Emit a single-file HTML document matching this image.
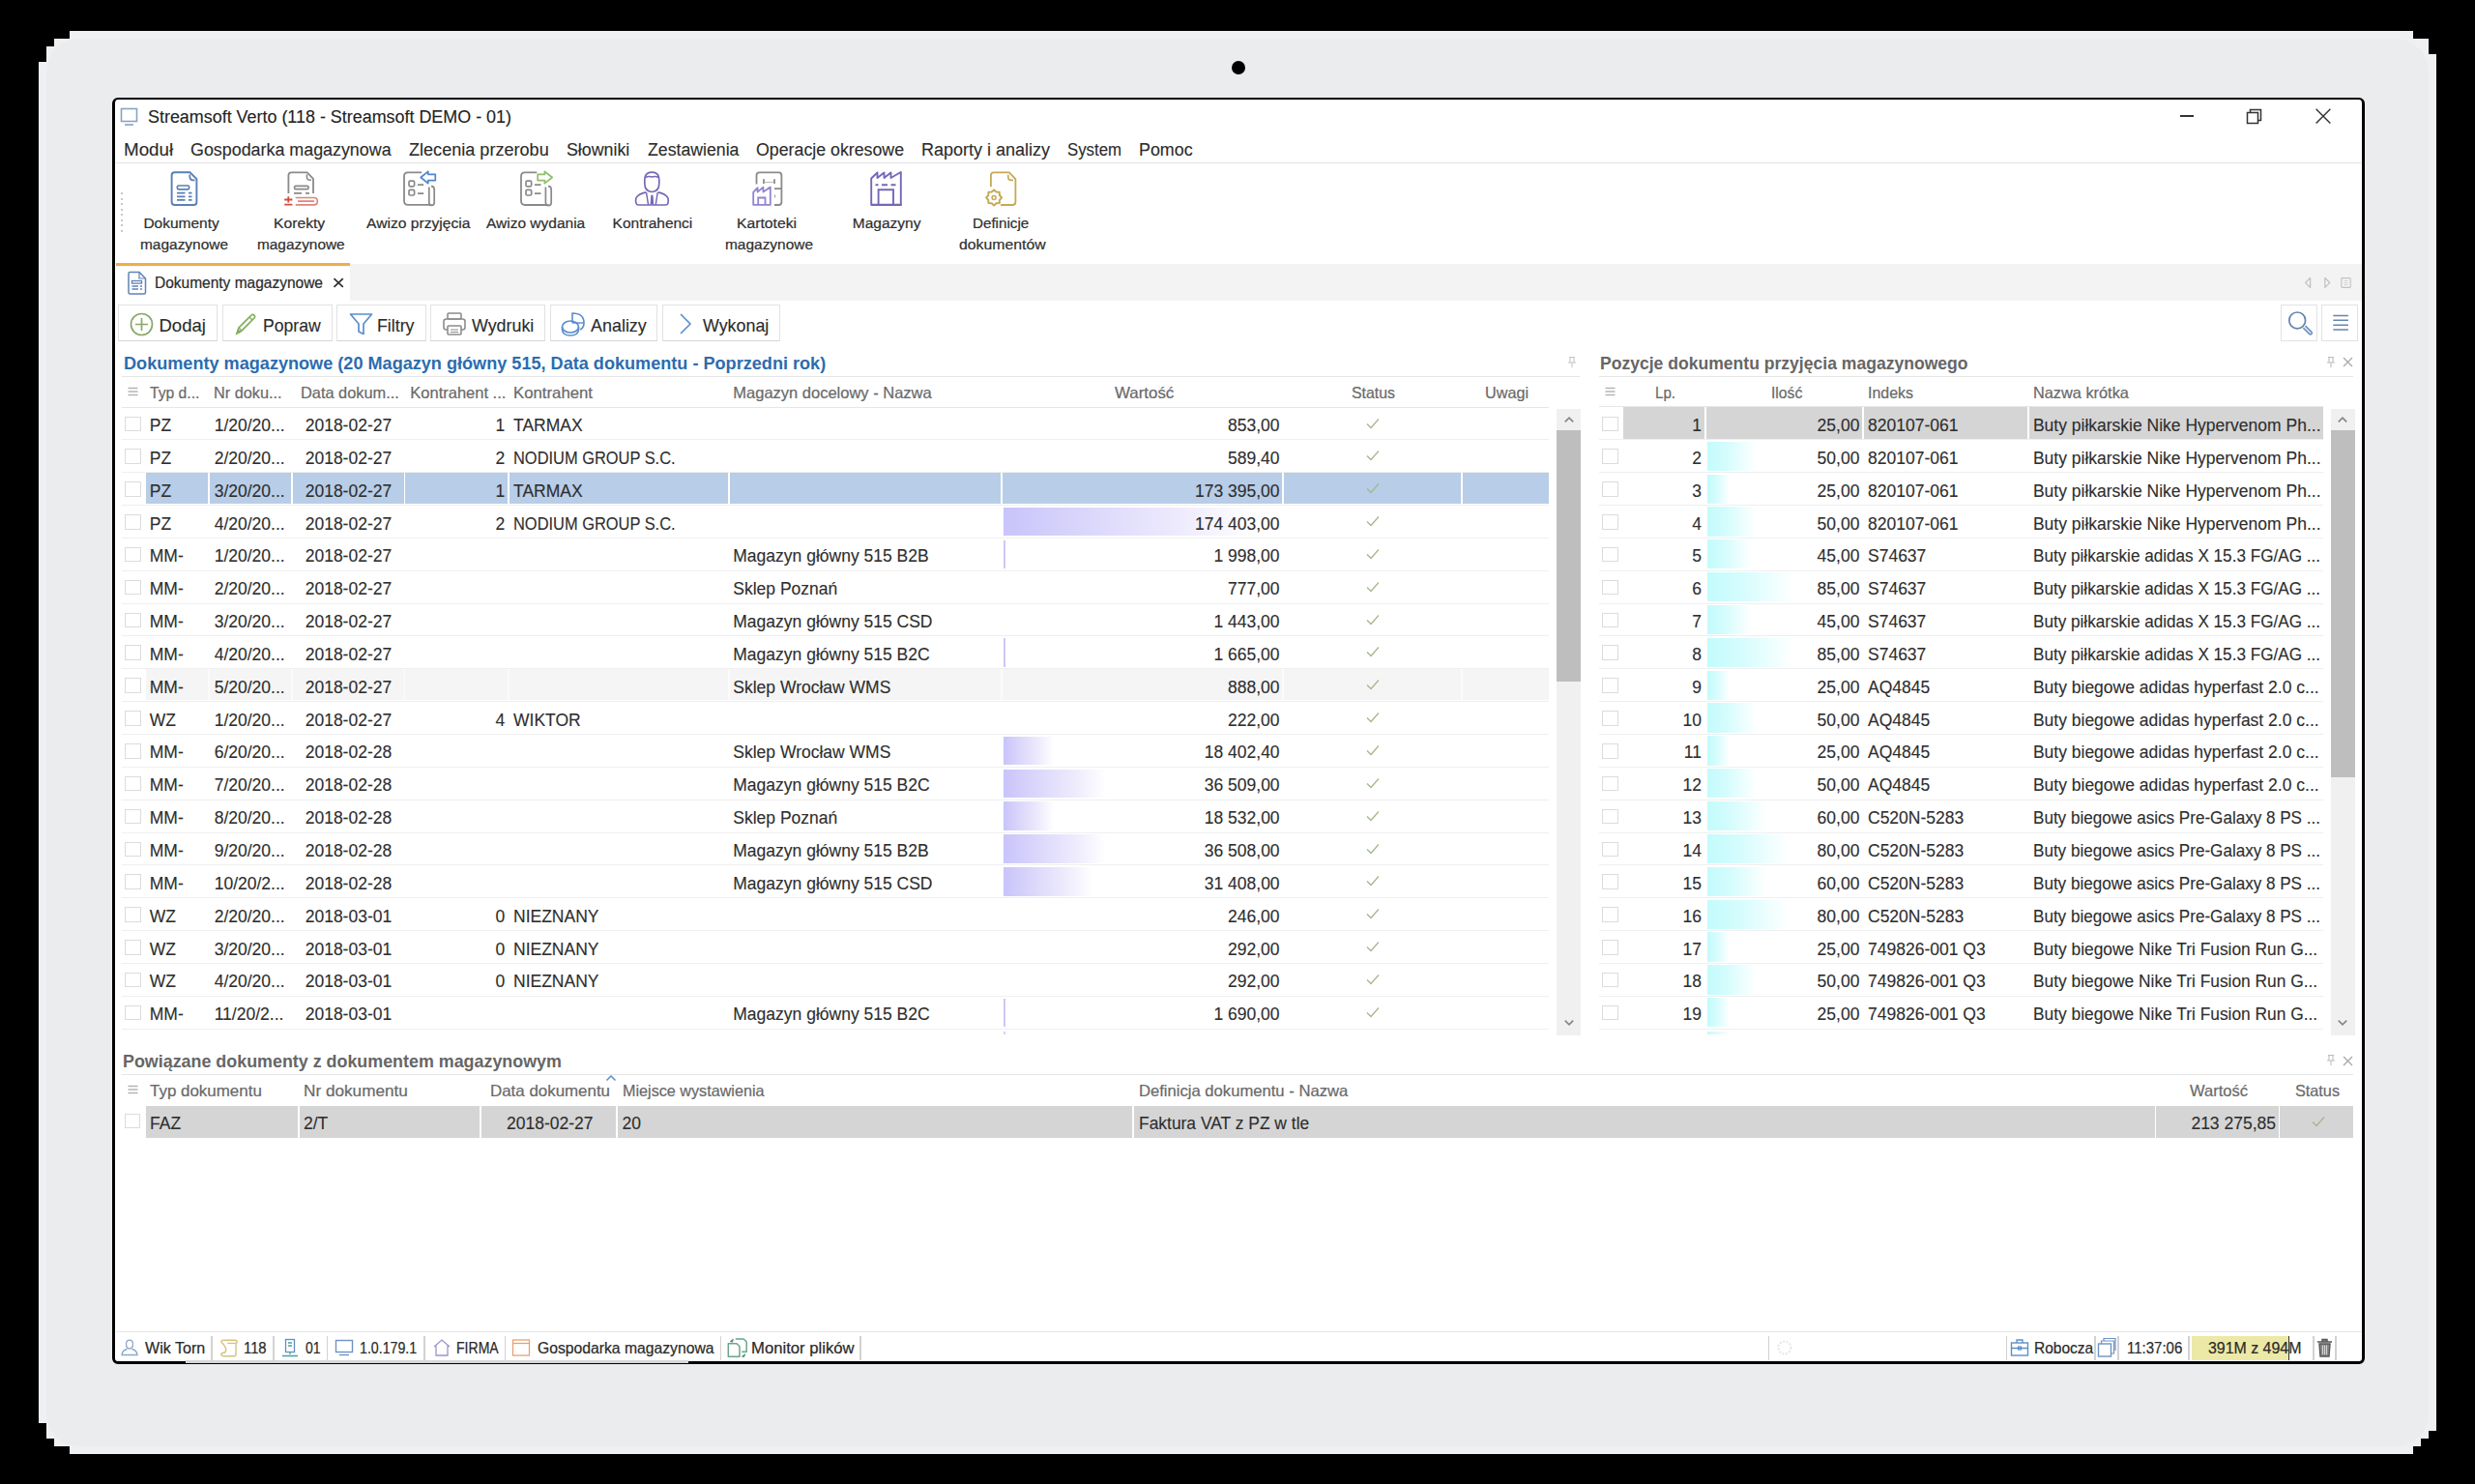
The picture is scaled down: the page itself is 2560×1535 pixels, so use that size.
<!DOCTYPE html>
<html><head><meta charset="utf-8"><title>Streamsoft Verto</title><style>
html,body{margin:0;padding:0;background:#000;width:2560px;height:1535px;overflow:hidden;}
body{position:relative;font-family:"Liberation Sans",sans-serif;}
.r{position:absolute;}
.t{position:absolute;white-space:nowrap;line-height:normal;-webkit-text-stroke:0.12px currentColor;}
</style></head><body>
<div class="r" style="left:40px;top:32px;width:2480px;height:1472px;background:#eff0f2;"></div>
<div class="r" style="left:48px;top:40px;width:2464px;height:1456px;background:#ebecee;border-radius:34px;"></div>
<div class="r" style="left:40px;top:32px;width:32px;height:8px;background:#000;"></div>
<div class="r" style="left:40px;top:40px;width:16px;height:8px;background:#000;"></div>
<div class="r" style="left:40px;top:48px;width:8px;height:16px;background:#000;"></div>
<div class="r" style="left:2496px;top:32px;width:24px;height:8px;background:#000;"></div>
<div class="r" style="left:2512px;top:40px;width:8px;height:16px;background:#000;"></div>
<div class="r" style="left:40px;top:1472px;width:8px;height:32px;background:#000;"></div>
<div class="r" style="left:48px;top:1488px;width:8px;height:16px;background:#000;"></div>
<div class="r" style="left:56px;top:1496px;width:16px;height:8px;background:#000;"></div>
<div class="r" style="left:2512px;top:1480px;width:8px;height:24px;background:#000;"></div>
<div class="r" style="left:2504px;top:1488px;width:8px;height:16px;background:#000;"></div>
<div class="r" style="left:2496px;top:1496px;width:8px;height:8px;background:#000;"></div>
<div class="r" style="left:1274px;top:63px;width:14px;height:14px;border-radius:50%;background:#000"></div>
<div class="r" style="left:116px;top:101px;width:2330px;height:1310px;box-sizing:border-box;border-style:solid;border-color:#000;border-width:2.1px 3.8px 3.9px 3.5px;border-radius:6px;background:#fff"></div>
<div class="r" style="left:192px;top:1407.3px;width:520px;height:2.5px;background:#d6d6d6;"></div>
<svg class="r" style="left:124px;top:111px" width="20" height="20" viewBox="0 0 20 20" fill="none"><rect x="1.5" y="1.5" width="16" height="13" stroke="#8aa2c4" stroke-width="1.6"/><line x1="5" y1="18" x2="14" y2="18" stroke="#8aa2c4" stroke-width="1.6"/></svg>
<div class="t" style="top:111.31px;font-size:18px;color:#222;left:152.5px;transform:scaleX(0.9952);transform-origin:left;">Streamsoft Verto (118 - Streamsoft DEMO - 01)</div>
<div class="r" style="left:2254.6px;top:119.3px;width:14.4px;height:1.4px;background:#333;"></div>
<svg class="r" style="left:2322px;top:111px" width="20" height="18" viewBox="0 0 20 18" fill="none"><rect x="2.5" y="5.5" width="11" height="11" stroke="#333" stroke-width="1.5"/><path d="M5.5 5.5V2.5H16.5V13.5H13.5" stroke="#333" stroke-width="1.5"/></svg>
<svg class="r" style="left:2393px;top:110px" width="20" height="20" viewBox="0 0 20 20" fill="none"><path d="M2.6 2.8L17.4 17.6M17.4 2.8L2.6 17.6" stroke="#333" stroke-width="1.45"/></svg>
<div class="t" style="top:145.01px;font-size:18px;color:#2b2b2b;left:128.2px;transform:scaleX(1.0443);transform-origin:left;">Moduł</div>
<div class="t" style="top:145.01px;font-size:18px;color:#2b2b2b;left:196.8px;transform:scaleX(0.9927);transform-origin:left;">Gospodarka magazynowa</div>
<div class="t" style="top:145.01px;font-size:18px;color:#2b2b2b;left:422.8px;transform:scaleX(1.0043);transform-origin:left;">Zlecenia przerobu</div>
<div class="t" style="top:145.01px;font-size:18px;color:#2b2b2b;left:586.4px;transform:scaleX(0.9890);transform-origin:left;">Słowniki</div>
<div class="t" style="top:145.01px;font-size:18px;color:#2b2b2b;left:669.8px;transform:scaleX(0.9828);transform-origin:left;">Zestawienia</div>
<div class="t" style="top:145.01px;font-size:18px;color:#2b2b2b;left:782.3px;transform:scaleX(0.9872);transform-origin:left;">Operacje okresowe</div>
<div class="t" style="top:145.01px;font-size:18px;color:#2b2b2b;left:953px;">Raporty i analizy</div>
<div class="t" style="top:145.01px;font-size:18px;color:#2b2b2b;left:1104px;transform:scaleX(0.9331);transform-origin:left;">System</div>
<div class="t" style="top:145.01px;font-size:18px;color:#2b2b2b;left:1178px;transform:scaleX(0.9924);transform-origin:left;">Pomoc</div>
<div class="r" style="left:119.5px;top:167.5px;width:2323px;height:1.5px;background:#e3e3e3;"></div>
<div class="r" style="left:124.5px;top:199px;width:2px;height:2px;background:#c8c8c8;"></div>
<div class="r" style="left:124.5px;top:204.5px;width:2px;height:2px;background:#c8c8c8;"></div>
<div class="r" style="left:124.5px;top:210px;width:2px;height:2px;background:#c8c8c8;"></div>
<div class="r" style="left:124.5px;top:215.5px;width:2px;height:2px;background:#c8c8c8;"></div>
<div class="r" style="left:124.5px;top:221px;width:2px;height:2px;background:#c8c8c8;"></div>
<div class="r" style="left:124.5px;top:226.5px;width:2px;height:2px;background:#c8c8c8;"></div>
<div class="r" style="left:124.5px;top:232px;width:2px;height:2px;background:#c8c8c8;"></div>
<div class="r" style="left:124.5px;top:237.5px;width:2px;height:2px;background:#c8c8c8;"></div>
<svg class="r" style="left:172px;top:174px" width="36" height="42" viewBox="172 174 36 42" fill="none"><path d="M177.6 181.5Q177.6 178.3 180.8 178.3H196.5L203.4 185.2V209Q203.4 212 200.4 212H180.8Q177.6 212 177.6 209Z" stroke="#5a80b4" stroke-width="1.9"/><path d="M196.3 180.5V183Q196.3 186.3 199.6 186.3H201.5" stroke="#5a80b4" stroke-width="1.7"/><rect x="183.4" y="192" width="12.2" height="3.8" rx="1.2" stroke="#5a80b4" stroke-width="1.7"/><path d="M183 199.7H191.5M195 199.7H198.5M183 203.3H191.5M195 203.3H198.5M183 206.9H191.5M195 206.9H198.5" stroke="#5a80b4" stroke-width="1.7"/></svg>
<svg class="r" style="left:290px;top:174px" width="42" height="42" viewBox="290 174 42 42" fill="none"><path d="M298.4 200V181.5Q298.4 178.4 301.5 178.4H317.6L324 184.8V200" stroke="#8a8a8a" stroke-width="1.8"/><path d="M317.4 180.6V183Q317.4 186.3 320.7 186.3H322" stroke="#8a8a8a" stroke-width="1.6"/><rect x="304.6" y="192.3" width="14.4" height="3.4" rx="1.2" stroke="#8a8a8a" stroke-width="1.7"/><path d="M304 199.8H312M316 199.8H320" stroke="#8a8a8a" stroke-width="1.7"/><path d="M294.2 206.5H302.4M298.3 203.2V209.5M294.2 211.6H302.4" stroke="#d64c3c" stroke-width="1.8"/><path d="M305.7 204.5H325Q328.3 204.5 328.3 208.2Q328.3 211.8 325 211.8H305.7M308 208.2H325" stroke="#e0857a" stroke-width="1.7"/></svg>
<svg class="r" style="left:412px;top:174px" width="44" height="42" viewBox="412 174 44 42" fill="none"><path d="M436.3 178.3H422Q418 178.3 418 182.3V207.8Q418 211.9 422 211.9H446.5" stroke="#8a8a8a" stroke-width="1.8"/><path d="M443.8 193.5V209.5Q443.8 212.3 446.5 212.3Q449.2 212.3 449.2 209.5V196Q449.2 192.6 446 192.6" stroke="#8a8a8a" stroke-width="1.7"/><rect x="423" y="187.2" width="5.6" height="5.6" rx="1.3" stroke="#8a8a8a" stroke-width="1.7"/><rect x="423" y="196.4" width="5.6" height="5.6" rx="1.3" stroke="#8a8a8a" stroke-width="1.7"/><path d="M432 191.2H438.2M432 200.2H438.2" stroke="#8a8a8a" stroke-width="1.7"/><path d="M435.2 183.5L442.8 177.3V180.3H450.3V186.6H442.8V189.7Z" stroke="#4f86d0" stroke-width="1.7" stroke-linejoin="round" fill="#fff"/></svg>
<svg class="r" style="left:534px;top:174px" width="44" height="42" viewBox="534 174 44 42" fill="none"><path d="M555.3 178.3H543Q539 178.3 539 182.3V207.8Q539 212 543 212H567.5" stroke="#8a8a8a" stroke-width="1.8"/><path d="M564.4 193.5V209.5Q564.4 212.6 567.3 212.6Q570.2 212.6 570.2 209.5V196Q570.2 192.6 567 192.6" stroke="#8a8a8a" stroke-width="1.7"/><rect x="544" y="187.2" width="5.7" height="5.6" rx="1.3" stroke="#8a8a8a" stroke-width="1.7"/><rect x="544" y="196.4" width="5.7" height="5.6" rx="1.3" stroke="#8a8a8a" stroke-width="1.7"/><path d="M553 191.2H559.5M553 200.2H559.5" stroke="#8a8a8a" stroke-width="1.7"/><path d="M571.2 183.5L563.4 177.3V180.4H556.2V186.6H563.4V189.7Z" stroke="#8fbf6a" stroke-width="1.7" stroke-linejoin="round" fill="#fff"/></svg>
<svg class="r" style="left:652px;top:174px" width="44" height="42" viewBox="652 174 44 42" fill="none"><path d="M666.8 186Q666.8 178.2 674.3 178.2Q681.8 178.2 681.8 186V189.5Q681.8 198 674.3 198.5Q666.8 198 666.8 189.5Z" stroke="#7468b8" stroke-width="1.7"/><path d="M667.5 183.6Q670.5 181.6 674.3 183Q678 181.6 681.2 183.6" stroke="#7468b8" stroke-width="1.5"/><path d="M668.3 198.8Q660 200.5 657.8 205Q656.8 212 660.5 212H688.5Q692 212 691 205Q689 200.5 680.5 198.8" stroke="#7468b8" stroke-width="1.7"/><path d="M668.5 199L670.6 212M680.2 199L678.2 212" stroke="#7468b8" stroke-width="1.5"/><path d="M673.3 201.8H675.5L676.2 211.5H672.6Z" fill="#7468b8"/></svg>
<svg class="r" style="left:774px;top:174px" width="40" height="42" viewBox="774 174 40 42" fill="none"><path d="M782.5 190.5V181.5Q782.5 178.4 785.5 178.4H805.4Q808.4 178.4 808.4 181.5V209Q808.4 212 805.4 212H801" stroke="#8a8a8a" stroke-width="1.8"/><path d="M790 185.3V190M801 185.3V190M801 195.1H808" stroke="#8a8a8a" stroke-width="1.8"/><path d="M790.5 188.6H800.5" stroke="#b8b8b8" stroke-width="1"/><path d="M801.6 201.5V204.5" stroke="#aaa" stroke-width="1.2"/><path d="M779.2 211.8V198.8L783.6 194.2V198.6L789.4 193.6V198.6L796.8 193.4V211.8Z" stroke="#9283d4" stroke-width="1.8" stroke-linejoin="round"/><path d="M784.2 211.8V204.5H791.5V211.8" stroke="#9283d4" stroke-width="1.8"/></svg>
<svg class="r" style="left:896px;top:174px" width="40" height="42" viewBox="896 174 40 42" fill="none"><path d="M901.2 211.5V184.5L907.5 178.5V184L914.5 178.5V184L921.5 178.5V184L931.8 178V211.5" stroke="#7468b8" stroke-width="1.9" stroke-linejoin="round"/><path d="M900.5 211.8H932.8" stroke="#7468b8" stroke-width="2.3"/><path d="M905.5 191.3H908.5M912 191.3H918M921.5 191.3H926.5" stroke="#7468b8" stroke-width="1.9"/><path d="M908.6 211.5V196.3H924V211.5" stroke="#7468b8" stroke-width="1.9"/></svg>
<svg class="r" style="left:1016px;top:174px" width="40" height="42" viewBox="1016 174 40 42" fill="none"><path d="M1024.9 193.2V181.5Q1024.9 178.4 1028 178.4H1043.8L1050.4 185V209Q1050.4 212 1047.4 212H1036.5Q1035.5 212 1035 212.5" stroke="#c6a955" stroke-width="1.8"/><path d="M1042.8 180.7V183.3Q1042.8 186.4 1045.9 186.4H1048" stroke="#c6a955" stroke-width="1.6"/><path d="M1028.10 196.40L1030.51 198.58L1033.76 198.74L1033.92 201.99L1036.10 204.40L1033.92 206.81L1033.76 210.06L1030.51 210.22L1028.10 212.40L1025.69 210.22L1022.44 210.06L1022.28 206.81L1020.10 204.40L1022.28 201.99L1022.44 198.74L1025.69 198.58Z" stroke="#c6a955" stroke-width="2" stroke-linejoin="round"/><circle cx="1028.1" cy="204.4" r="2" stroke="#c6a955" stroke-width="1.5"/></svg>
<div class="t" style="top:222.27px;font-size:15.5px;color:#2f2f2f;-webkit-text-stroke:0.22px currentColor;left:148.4px;">Dokumenty</div>
<div class="t" style="top:243.87px;font-size:15.5px;color:#2f2f2f;-webkit-text-stroke:0.22px currentColor;left:145px;transform:scaleX(0.9964);transform-origin:left;">magazynowe</div>
<div class="t" style="top:222.27px;font-size:15.5px;color:#2f2f2f;-webkit-text-stroke:0.22px currentColor;left:282.5px;transform:scaleX(1.0124);transform-origin:left;">Korekty</div>
<div class="t" style="top:243.87px;font-size:15.5px;color:#2f2f2f;-webkit-text-stroke:0.22px currentColor;left:266px;transform:scaleX(0.9920);transform-origin:left;">magazynowe</div>
<div class="t" style="top:222.27px;font-size:15.5px;color:#2f2f2f;-webkit-text-stroke:0.22px currentColor;left:379.4px;transform:scaleX(1.0081);transform-origin:left;">Awizo przyjęcia</div>
<div class="t" style="top:222.27px;font-size:15.5px;color:#2f2f2f;-webkit-text-stroke:0.22px currentColor;left:503px;">Awizo wydania</div>
<div class="t" style="top:222.27px;font-size:15.5px;color:#2f2f2f;-webkit-text-stroke:0.22px currentColor;left:633.6px;">Kontrahenci</div>
<div class="t" style="top:222.27px;font-size:15.5px;color:#2f2f2f;-webkit-text-stroke:0.22px currentColor;left:762.3px;transform:scaleX(1.0152);transform-origin:left;">Kartoteki</div>
<div class="t" style="top:243.87px;font-size:15.5px;color:#2f2f2f;-webkit-text-stroke:0.22px currentColor;left:750px;transform:scaleX(0.9964);transform-origin:left;">magazynowe</div>
<div class="t" style="top:222.27px;font-size:15.5px;color:#2f2f2f;-webkit-text-stroke:0.22px currentColor;left:881.8px;">Magazyny</div>
<div class="t" style="top:222.27px;font-size:15.5px;color:#2f2f2f;-webkit-text-stroke:0.22px currentColor;left:1005.5px;transform:scaleX(0.9791);transform-origin:left;">Definicje</div>
<div class="t" style="top:243.87px;font-size:15.5px;color:#2f2f2f;-webkit-text-stroke:0.22px currentColor;left:992.4px;transform:scaleX(1.0195);transform-origin:left;">dokumentów</div>
<div class="r" style="left:119.5px;top:272.5px;width:2323px;height:38.5px;background:#f3f3f3;"></div>
<div class="r" style="left:119.5px;top:272.3px;width:242px;height:3.2px;background:#efae4a;"></div>
<div class="r" style="left:119.5px;top:275.5px;width:242px;height:35.5px;background:#fff;"></div>
<svg class="r" style="left:131px;top:280px" width="22" height="26" viewBox="0 0 22 26" fill="none"><path d="M2 3Q2 1.5 3.5 1.5H13L19.5 8V22.5Q19.5 24 18 24H3.5Q2 24 2 22.5Z" stroke="#5f83b6" stroke-width="1.5"/><path d="M13 1.5V8H19.5" stroke="#5f83b6" stroke-width="1.2"/><rect x="5.5" y="10.5" width="10" height="2.6" stroke="#5f83b6" stroke-width="1.3"/><path d="M5.5 16H12M14 16H16M5.5 19H12M14 19H16" stroke="#5f83b6" stroke-width="1.4"/></svg>
<div class="t" style="top:283.24px;font-size:16.2px;color:#2b2b2b;-webkit-text-stroke:0.22px currentColor;left:159.6px;transform:scaleX(0.9572);transform-origin:left;">Dokumenty magazynowe</div>
<svg class="r" style="left:344px;top:287px" width="12" height="11" viewBox="0 0 12 11" fill="none"><path d="M1.5 1.2L10.8 9.8M10.8 1.2L1.5 9.8" stroke="#333" stroke-width="1.8"/></svg>
<svg class="r" style="left:2382px;top:285px" width="52" height="15" viewBox="2382 285 52 15" fill="none"><path d="M2389.6 287.5L2384.6 292.4L2389.6 297.3Z" stroke="#bcbcbc" stroke-width="1.1" stroke-linejoin="round"/><path d="M2404.8 287.5L2409.8 292.4L2404.8 297.3Z" stroke="#bcbcbc" stroke-width="1.1" stroke-linejoin="round"/><rect x="2421.8" y="287.6" width="9.4" height="9.8" rx="0.8" stroke="#c2c2c2" stroke-width="1.1"/><path d="M2424.5 290.5H2428.5M2424.5 292.5H2428.5M2424.5 294.5H2428.5" stroke="#d0d0d0" stroke-width="0.9"/></svg>
<div class="r" style="left:121.9px;top:315.3px;width:103.4px;height:37.8px;box-sizing:border-box;border:1px solid #e2e2e2;border-bottom-color:#d6d6d6;background:#fff"></div>
<div class="r" style="left:229.7px;top:315.3px;width:114px;height:37.8px;box-sizing:border-box;border:1px solid #e2e2e2;border-bottom-color:#d6d6d6;background:#fff"></div>
<div class="r" style="left:348px;top:315.3px;width:92.6px;height:37.8px;box-sizing:border-box;border:1px solid #e2e2e2;border-bottom-color:#d6d6d6;background:#fff"></div>
<div class="r" style="left:445px;top:315.3px;width:119px;height:37.8px;box-sizing:border-box;border:1px solid #e2e2e2;border-bottom-color:#d6d6d6;background:#fff"></div>
<div class="r" style="left:569px;top:315.3px;width:111px;height:37.8px;box-sizing:border-box;border:1px solid #e2e2e2;border-bottom-color:#d6d6d6;background:#fff"></div>
<div class="r" style="left:684.5px;top:315.3px;width:122.5px;height:37.8px;box-sizing:border-box;border:1px solid #e2e2e2;border-bottom-color:#d6d6d6;background:#fff"></div>
<div class="r" style="left:2359px;top:315.3px;width:37.5px;height:37.8px;box-sizing:border-box;border:1px solid #e2e2e2;background:#fff"></div>
<div class="r" style="left:2401px;top:315.3px;width:38px;height:37.8px;box-sizing:border-box;border:1px solid #e2e2e2;background:#fff"></div>
<div class="t" style="top:326.06px;font-size:18.5px;color:#2b2b2b;left:164.5px;">Dodaj</div>
<div class="t" style="top:326.06px;font-size:18.5px;color:#2b2b2b;left:272.3px;transform:scaleX(0.9517);transform-origin:left;">Popraw</div>
<div class="t" style="top:326.06px;font-size:18.5px;color:#2b2b2b;left:390.4px;transform:scaleX(0.9608);transform-origin:left;">Filtry</div>
<div class="t" style="top:326.06px;font-size:18.5px;color:#2b2b2b;left:487.7px;transform:scaleX(0.9648);transform-origin:left;">Wydruki</div>
<div class="t" style="top:326.06px;font-size:18.5px;color:#2b2b2b;left:610.7px;transform:scaleX(0.9692);transform-origin:left;">Analizy</div>
<div class="t" style="top:326.06px;font-size:18.5px;color:#2b2b2b;left:726.7px;transform:scaleX(0.9650);transform-origin:left;">Wykonaj</div>
<svg class="r" style="left:134px;top:322.5px" width="25" height="25" viewBox="0 0 25 25" fill="none"><circle cx="12.5" cy="12.5" r="11" stroke="#8aa86a" stroke-width="1.7"/><path d="M12.5 6V19M6 12.5H19" stroke="#8aa86a" stroke-width="1.7"/></svg>
<svg class="r" style="left:242px;top:324px" width="24" height="23" viewBox="0 0 24 23" fill="none"><path d="M3 21L5 15L18 2Q19.5 0.8 21 2.2Q22.3 3.6 21 5L8 18Z" stroke="#7fae5a" stroke-width="1.6"/><path d="M16 4L19 7M5 15L8 18" stroke="#7fae5a" stroke-width="1.3"/><path d="M2 22L4 16L7.5 19.5Z" fill="#7fae5a"/></svg>
<svg class="r" style="left:361px;top:322.5px" width="25" height="24" viewBox="0 0 25 24" fill="none"><path d="M1.5 2H23.5L15 12V22.5L10 20V12Z" stroke="#5b8dcc" stroke-width="1.7" stroke-linejoin="round"/></svg>
<svg class="r" style="left:456.5px;top:321.5px" width="26" height="26" viewBox="0 0 26 26" fill="none"><rect x="6" y="2" width="14" height="6" rx="1" stroke="#8c8c8c" stroke-width="1.6"/><rect x="2" y="8" width="22" height="11" rx="2.5" stroke="#8c8c8c" stroke-width="1.6"/><rect x="6" y="15" width="14" height="9" rx="1" stroke="#8c8c8c" stroke-width="1.6" fill="#fff"/><path d="M9 19H17M9 21.5H17" stroke="#8c8c8c" stroke-width="1.2"/></svg>
<svg class="r" style="left:580px;top:321.5px" width="26" height="26" viewBox="0 0 26 26" fill="none"><ellipse cx="10" cy="16" rx="8.5" ry="6" stroke="#5b8dcc" stroke-width="1.6"/><path d="M1.5 16V19Q2 25 10 25Q18 25 18.5 19V16" stroke="#5b8dcc" stroke-width="1.6"/><path d="M12 12V2Q24 2 24 12Q24 17 20 19" stroke="#5b8dcc" stroke-width="1.6"/><path d="M12 12H24" stroke="#5b8dcc" stroke-width="1.4"/></svg>
<svg class="r" style="left:701px;top:323px" width="16" height="24" viewBox="0 0 16 24" fill="none"><path d="M3 2L13 12L3 22" stroke="#5b8dcc" stroke-width="1.6"/></svg>
<svg class="r" style="left:2362px;top:318px" width="32" height="32" viewBox="2362 318 32 32" fill="none"><circle cx="2376.2" cy="331.4" r="8.4" stroke="#6585b0" stroke-width="1.7"/><path d="M2382.3 339.2L2388.6 345.5Q2389.8 346.6 2390.9 345.5Q2392 344.4 2390.8 343.2L2384.6 337" stroke="#6585b0" stroke-width="1.3" fill="#cfe3fb"/></svg>
<svg class="r" style="left:2410px;top:322px" width="22" height="24" viewBox="2410 322 22 24" fill="none"><path d="M2413.3 326.4H2428.9M2413.3 331.3H2428.9M2413.3 336.2H2428.9M2413.3 341.1H2428.9" stroke="#6585b0" stroke-width="1.5"/></svg>
<div class="t" style="top:366.39px;font-size:17.8px;color:#2b6cb0;font-weight:bold;-webkit-text-stroke:0;left:127.9px;transform:scaleX(1.0180);transform-origin:left;">Dokumenty magazynowe (20 Magazyn główny 515, Data dokumentu - Poprzedni rok)</div>
<div class="r" style="left:125.7px;top:389px;width:1508px;height:1.2px;background:#e6e6e6;"></div>
<svg class="r" style="left:1620px;top:368px" width="12" height="13" viewBox="0 0 12 13" fill="none"><path d="M3 1.5H9M4 1.5V7H8V1.5M2 7H10M6 7V12" stroke="#c5c5c5" stroke-width="1.1"/></svg>
<svg class="r" style="left:131.5px;top:400px" width="11" height="10" viewBox="0 0 11 10" fill="none"><path d="M0.5 1.5H10.5M0.5 5H10.5M0.5 8.5H10.5" stroke="#b5b5b5" stroke-width="1.3"/></svg>
<div class="t" style="top:397.27px;font-size:16.5px;color:#6a6a6a;-webkit-text-stroke:0.22px currentColor;left:154.8px;transform:scaleX(0.9499);transform-origin:left;">Typ d...</div>
<div class="t" style="top:397.27px;font-size:16.5px;color:#6a6a6a;-webkit-text-stroke:0.22px currentColor;left:221.3px;transform:scaleX(0.9870);transform-origin:left;">Nr doku...</div>
<div class="t" style="top:397.27px;font-size:16.5px;color:#6a6a6a;-webkit-text-stroke:0.22px currentColor;left:310.9px;transform:scaleX(0.9911);transform-origin:left;">Data dokum...</div>
<div class="t" style="top:397.27px;font-size:16.5px;color:#6a6a6a;-webkit-text-stroke:0.22px currentColor;left:424.3px;">Kontrahent ...</div>
<div class="t" style="top:397.27px;font-size:16.5px;color:#6a6a6a;-webkit-text-stroke:0.22px currentColor;left:531px;transform:scaleX(1.0157);transform-origin:left;">Kontrahent</div>
<div class="t" style="top:397.27px;font-size:16.5px;color:#6a6a6a;-webkit-text-stroke:0.22px currentColor;left:758.3px;">Magazyn docelowy - Nazwa</div>
<div class="t" style="top:397.27px;font-size:16.5px;color:#6a6a6a;-webkit-text-stroke:0.22px currentColor;left:1152.7px;transform:scaleX(1.0235);transform-origin:left;">Wartość</div>
<div class="t" style="top:397.27px;font-size:16.5px;color:#6a6a6a;-webkit-text-stroke:0.22px currentColor;left:1398px;transform:scaleX(0.9620);transform-origin:left;">Status</div>
<div class="t" style="top:397.27px;font-size:16.5px;color:#6a6a6a;-webkit-text-stroke:0.22px currentColor;left:1536px;transform:scaleX(0.9814);transform-origin:left;">Uwagi</div>
<div class="r" style="left:125.7px;top:420.5px;width:1476.7px;height:1px;background:#e6e6e6;"></div>
<div class="r" style="left:125.7px;top:454.35px;width:1476.7px;height:1px;background:#efefef;"></div>
<div class="r" style="left:129px;top:430.5px;width:16.5px;height:15.5px;box-sizing:border-box;border:1.4px solid #dcdcdc;background:#fff"></div>
<div class="t" style="top:429.96px;font-size:17.5px;color:#2e2e2e;left:154.8px;">PZ</div>
<div class="t" style="top:429.96px;font-size:17.5px;color:#2e2e2e;left:221.7px;">1/20/20...</div>
<div class="t" style="top:429.96px;font-size:17.5px;color:#2e2e2e;left:315.7px;">2018-02-27</div>
<div class="t" style="top:429.96px;font-size:17.5px;color:#2e2e2e;left:512.57px;">1</div>
<div class="t" style="top:429.96px;font-size:17.5px;color:#2e2e2e;left:531px;">TARMAX</div>
<div class="t" style="top:429.96px;font-size:17.5px;color:#2e2e2e;left:1270.07px;">853,00</div>
<svg class="r" style="left:1413px;top:431.5px" width="14" height="12" viewBox="0 0 14 12" fill="none"><path d="M1 6.5L5 10.5L13 1.5" stroke="#a3b78a" stroke-width="1.25"/></svg>
<div class="r" style="left:125.7px;top:488.2px;width:1476.7px;height:1px;background:#efefef;"></div>
<div class="r" style="left:129px;top:464.35px;width:16.5px;height:15.5px;box-sizing:border-box;border:1.4px solid #dcdcdc;background:#fff"></div>
<div class="t" style="top:463.81px;font-size:17.5px;color:#2e2e2e;left:154.8px;">PZ</div>
<div class="t" style="top:463.81px;font-size:17.5px;color:#2e2e2e;left:221.7px;">2/20/20...</div>
<div class="t" style="top:463.81px;font-size:17.5px;color:#2e2e2e;left:315.7px;">2018-02-27</div>
<div class="t" style="top:463.81px;font-size:17.5px;color:#2e2e2e;left:512.57px;">2</div>
<div class="t" style="top:463.81px;font-size:17.5px;color:#2e2e2e;left:531px;transform:scaleX(0.9385);transform-origin:left;">NODIUM GROUP S.C.</div>
<div class="t" style="top:463.81px;font-size:17.5px;color:#2e2e2e;left:1270.07px;">589,40</div>
<svg class="r" style="left:1413px;top:465.35px" width="14" height="12" viewBox="0 0 14 12" fill="none"><path d="M1 6.5L5 10.5L13 1.5" stroke="#a3b78a" stroke-width="1.25"/></svg>
<div class="r" style="left:125.7px;top:522.05px;width:1476.7px;height:1px;background:#efefef;"></div>
<div class="r" style="left:151px;top:489.1px;width:1451.4px;height:32.15px;background:#b8cde7;"></div>
<div class="r" style="left:215.2px;top:489.1px;width:1.6px;height:32.15px;background:#fff;"></div>
<div class="r" style="left:301.2px;top:489.1px;width:1.6px;height:32.15px;background:#fff;"></div>
<div class="r" style="left:417.7px;top:489.1px;width:1.6px;height:32.15px;background:#fff;"></div>
<div class="r" style="left:525px;top:489.1px;width:1.6px;height:32.15px;background:#fff;"></div>
<div class="r" style="left:753.1px;top:489.1px;width:1.6px;height:32.15px;background:#fff;"></div>
<div class="r" style="left:1035.2px;top:489.1px;width:1.6px;height:32.15px;background:#fff;"></div>
<div class="r" style="left:1326px;top:489.1px;width:1.6px;height:32.15px;background:#fff;"></div>
<div class="r" style="left:1511.2px;top:489.1px;width:1.6px;height:32.15px;background:#fff;"></div>
<div class="r" style="left:129px;top:498.2px;width:16.5px;height:15.5px;box-sizing:border-box;border:1.4px solid #dcdcdc;background:#fff"></div>
<div class="t" style="top:497.66px;font-size:17.5px;color:#2e2e2e;left:154.8px;">PZ</div>
<div class="t" style="top:497.66px;font-size:17.5px;color:#2e2e2e;left:221.7px;">3/20/20...</div>
<div class="t" style="top:497.66px;font-size:17.5px;color:#2e2e2e;left:315.7px;">2018-02-27</div>
<div class="t" style="top:497.66px;font-size:17.5px;color:#2e2e2e;left:512.57px;">1</div>
<div class="t" style="top:497.66px;font-size:17.5px;color:#2e2e2e;left:531px;">TARMAX</div>
<div class="t" style="top:497.66px;font-size:17.5px;color:#2e2e2e;left:1236.01px;">173 395,00</div>
<svg class="r" style="left:1413px;top:499.2px" width="14" height="12" viewBox="0 0 14 12" fill="none"><path d="M1 6.5L5 10.5L13 1.5" stroke="#a3b78a" stroke-width="1.25"/></svg>
<div class="r" style="left:125.7px;top:555.9px;width:1476.7px;height:1px;background:#efefef;"></div>
<div class="r" style="left:1037.8px;top:524.75px;width:262px;height:29.45px;background:linear-gradient(90deg,#c9c4fa 0%,#dcd8fb 35%,#eeebfd 70%,#ffffff 100%);"></div>
<div class="r" style="left:129px;top:532.05px;width:16.5px;height:15.5px;box-sizing:border-box;border:1.4px solid #dcdcdc;background:#fff"></div>
<div class="t" style="top:531.51px;font-size:17.5px;color:#2e2e2e;left:154.8px;">PZ</div>
<div class="t" style="top:531.51px;font-size:17.5px;color:#2e2e2e;left:221.7px;">4/20/20...</div>
<div class="t" style="top:531.51px;font-size:17.5px;color:#2e2e2e;left:315.7px;">2018-02-27</div>
<div class="t" style="top:531.51px;font-size:17.5px;color:#2e2e2e;left:512.57px;">2</div>
<div class="t" style="top:531.51px;font-size:17.5px;color:#2e2e2e;left:531px;transform:scaleX(0.9385);transform-origin:left;">NODIUM GROUP S.C.</div>
<div class="t" style="top:531.51px;font-size:17.5px;color:#2e2e2e;left:1236.01px;">174 403,00</div>
<svg class="r" style="left:1413px;top:533.05px" width="14" height="12" viewBox="0 0 14 12" fill="none"><path d="M1 6.5L5 10.5L13 1.5" stroke="#a3b78a" stroke-width="1.25"/></svg>
<div class="r" style="left:125.7px;top:589.75px;width:1476.7px;height:1px;background:#efefef;"></div>
<div class="r" style="left:1037.5px;top:558.6px;width:2.5px;height:29.45px;background:#cdc8f6;"></div>
<div class="r" style="left:129px;top:565.9px;width:16.5px;height:15.5px;box-sizing:border-box;border:1.4px solid #dcdcdc;background:#fff"></div>
<div class="t" style="top:565.36px;font-size:17.5px;color:#2e2e2e;left:154.8px;">MM-</div>
<div class="t" style="top:565.36px;font-size:17.5px;color:#2e2e2e;left:221.7px;">1/20/20...</div>
<div class="t" style="top:565.36px;font-size:17.5px;color:#2e2e2e;left:315.7px;">2018-02-27</div>
<div class="t" style="top:565.36px;font-size:17.5px;color:#2e2e2e;left:758.3px;">Magazyn główny 515 B2B</div>
<div class="t" style="top:565.36px;font-size:17.5px;color:#2e2e2e;left:1255.48px;">1 998,00</div>
<svg class="r" style="left:1413px;top:566.9px" width="14" height="12" viewBox="0 0 14 12" fill="none"><path d="M1 6.5L5 10.5L13 1.5" stroke="#a3b78a" stroke-width="1.25"/></svg>
<div class="r" style="left:125.7px;top:623.6px;width:1476.7px;height:1px;background:#efefef;"></div>
<div class="r" style="left:129px;top:599.75px;width:16.5px;height:15.5px;box-sizing:border-box;border:1.4px solid #dcdcdc;background:#fff"></div>
<div class="t" style="top:599.21px;font-size:17.5px;color:#2e2e2e;left:154.8px;">MM-</div>
<div class="t" style="top:599.21px;font-size:17.5px;color:#2e2e2e;left:221.7px;">2/20/20...</div>
<div class="t" style="top:599.21px;font-size:17.5px;color:#2e2e2e;left:315.7px;">2018-02-27</div>
<div class="t" style="top:599.21px;font-size:17.5px;color:#2e2e2e;left:758.3px;">Sklep Poznań</div>
<div class="t" style="top:599.21px;font-size:17.5px;color:#2e2e2e;left:1270.07px;">777,00</div>
<svg class="r" style="left:1413px;top:600.75px" width="14" height="12" viewBox="0 0 14 12" fill="none"><path d="M1 6.5L5 10.5L13 1.5" stroke="#a3b78a" stroke-width="1.25"/></svg>
<div class="r" style="left:125.7px;top:657.45px;width:1476.7px;height:1px;background:#efefef;"></div>
<div class="r" style="left:129px;top:633.6px;width:16.5px;height:15.5px;box-sizing:border-box;border:1.4px solid #dcdcdc;background:#fff"></div>
<div class="t" style="top:633.06px;font-size:17.5px;color:#2e2e2e;left:154.8px;">MM-</div>
<div class="t" style="top:633.06px;font-size:17.5px;color:#2e2e2e;left:221.7px;">3/20/20...</div>
<div class="t" style="top:633.06px;font-size:17.5px;color:#2e2e2e;left:315.7px;">2018-02-27</div>
<div class="t" style="top:633.06px;font-size:17.5px;color:#2e2e2e;left:758.3px;">Magazyn główny 515 CSD</div>
<div class="t" style="top:633.06px;font-size:17.5px;color:#2e2e2e;left:1255.48px;">1 443,00</div>
<svg class="r" style="left:1413px;top:634.6px" width="14" height="12" viewBox="0 0 14 12" fill="none"><path d="M1 6.5L5 10.5L13 1.5" stroke="#a3b78a" stroke-width="1.25"/></svg>
<div class="r" style="left:125.7px;top:691.3px;width:1476.7px;height:1px;background:#efefef;"></div>
<div class="r" style="left:1037.5px;top:660.15px;width:2.5px;height:29.45px;background:#cdc8f6;"></div>
<div class="r" style="left:129px;top:667.45px;width:16.5px;height:15.5px;box-sizing:border-box;border:1.4px solid #dcdcdc;background:#fff"></div>
<div class="t" style="top:666.91px;font-size:17.5px;color:#2e2e2e;left:154.8px;">MM-</div>
<div class="t" style="top:666.91px;font-size:17.5px;color:#2e2e2e;left:221.7px;">4/20/20...</div>
<div class="t" style="top:666.91px;font-size:17.5px;color:#2e2e2e;left:315.7px;">2018-02-27</div>
<div class="t" style="top:666.91px;font-size:17.5px;color:#2e2e2e;left:758.3px;">Magazyn główny 515 B2C</div>
<div class="t" style="top:666.91px;font-size:17.5px;color:#2e2e2e;left:1255.48px;">1 665,00</div>
<svg class="r" style="left:1413px;top:668.45px" width="14" height="12" viewBox="0 0 14 12" fill="none"><path d="M1 6.5L5 10.5L13 1.5" stroke="#a3b78a" stroke-width="1.25"/></svg>
<div class="r" style="left:125.7px;top:725.15px;width:1476.7px;height:1px;background:#efefef;"></div>
<div class="r" style="left:151px;top:692.2px;width:1451.4px;height:32.15px;background:#f5f5f5;"></div>
<div class="r" style="left:215.2px;top:692.2px;width:1.6px;height:32.15px;background:#fbfbfb;"></div>
<div class="r" style="left:301.2px;top:692.2px;width:1.6px;height:32.15px;background:#fbfbfb;"></div>
<div class="r" style="left:417.7px;top:692.2px;width:1.6px;height:32.15px;background:#fbfbfb;"></div>
<div class="r" style="left:525px;top:692.2px;width:1.6px;height:32.15px;background:#fbfbfb;"></div>
<div class="r" style="left:753.1px;top:692.2px;width:1.6px;height:32.15px;background:#fbfbfb;"></div>
<div class="r" style="left:1035.2px;top:692.2px;width:1.6px;height:32.15px;background:#fbfbfb;"></div>
<div class="r" style="left:1326px;top:692.2px;width:1.6px;height:32.15px;background:#fbfbfb;"></div>
<div class="r" style="left:1511.2px;top:692.2px;width:1.6px;height:32.15px;background:#fbfbfb;"></div>
<div class="r" style="left:129px;top:701.3px;width:16.5px;height:15.5px;box-sizing:border-box;border:1.4px solid #dcdcdc;background:#fff"></div>
<div class="t" style="top:700.76px;font-size:17.5px;color:#2e2e2e;left:154.8px;">MM-</div>
<div class="t" style="top:700.76px;font-size:17.5px;color:#2e2e2e;left:221.7px;">5/20/20...</div>
<div class="t" style="top:700.76px;font-size:17.5px;color:#2e2e2e;left:315.7px;">2018-02-27</div>
<div class="t" style="top:700.76px;font-size:17.5px;color:#2e2e2e;left:758.3px;">Sklep Wrocław WMS</div>
<div class="t" style="top:700.76px;font-size:17.5px;color:#2e2e2e;left:1270.07px;">888,00</div>
<svg class="r" style="left:1413px;top:702.3px" width="14" height="12" viewBox="0 0 14 12" fill="none"><path d="M1 6.5L5 10.5L13 1.5" stroke="#a3b78a" stroke-width="1.25"/></svg>
<div class="r" style="left:125.7px;top:759px;width:1476.7px;height:1px;background:#efefef;"></div>
<div class="r" style="left:129px;top:735.15px;width:16.5px;height:15.5px;box-sizing:border-box;border:1.4px solid #dcdcdc;background:#fff"></div>
<div class="t" style="top:734.61px;font-size:17.5px;color:#2e2e2e;left:154.8px;">WZ</div>
<div class="t" style="top:734.61px;font-size:17.5px;color:#2e2e2e;left:221.7px;">1/20/20...</div>
<div class="t" style="top:734.61px;font-size:17.5px;color:#2e2e2e;left:315.7px;">2018-02-27</div>
<div class="t" style="top:734.61px;font-size:17.5px;color:#2e2e2e;left:512.57px;">4</div>
<div class="t" style="top:734.61px;font-size:17.5px;color:#2e2e2e;left:531px;">WIKTOR</div>
<div class="t" style="top:734.61px;font-size:17.5px;color:#2e2e2e;left:1270.07px;">222,00</div>
<svg class="r" style="left:1413px;top:736.15px" width="14" height="12" viewBox="0 0 14 12" fill="none"><path d="M1 6.5L5 10.5L13 1.5" stroke="#a3b78a" stroke-width="1.25"/></svg>
<div class="r" style="left:125.7px;top:792.85px;width:1476.7px;height:1px;background:#efefef;"></div>
<div class="r" style="left:1037.8px;top:761.7px;width:52px;height:29.45px;background:linear-gradient(90deg,#c9c4fa 0%,#dcd8fb 35%,#eeebfd 70%,#ffffff 100%);"></div>
<div class="r" style="left:129px;top:769px;width:16.5px;height:15.5px;box-sizing:border-box;border:1.4px solid #dcdcdc;background:#fff"></div>
<div class="t" style="top:768.46px;font-size:17.5px;color:#2e2e2e;left:154.8px;">MM-</div>
<div class="t" style="top:768.46px;font-size:17.5px;color:#2e2e2e;left:221.7px;">6/20/20...</div>
<div class="t" style="top:768.46px;font-size:17.5px;color:#2e2e2e;left:315.7px;">2018-02-28</div>
<div class="t" style="top:768.46px;font-size:17.5px;color:#2e2e2e;left:758.3px;">Sklep Wrocław WMS</div>
<div class="t" style="top:768.46px;font-size:17.5px;color:#2e2e2e;left:1245.75px;">18 402,40</div>
<svg class="r" style="left:1413px;top:770px" width="14" height="12" viewBox="0 0 14 12" fill="none"><path d="M1 6.5L5 10.5L13 1.5" stroke="#a3b78a" stroke-width="1.25"/></svg>
<div class="r" style="left:125.7px;top:826.7px;width:1476.7px;height:1px;background:#efefef;"></div>
<div class="r" style="left:1037.8px;top:795.55px;width:106px;height:29.45px;background:linear-gradient(90deg,#c9c4fa 0%,#dcd8fb 35%,#eeebfd 70%,#ffffff 100%);"></div>
<div class="r" style="left:129px;top:802.85px;width:16.5px;height:15.5px;box-sizing:border-box;border:1.4px solid #dcdcdc;background:#fff"></div>
<div class="t" style="top:802.31px;font-size:17.5px;color:#2e2e2e;left:154.8px;">MM-</div>
<div class="t" style="top:802.31px;font-size:17.5px;color:#2e2e2e;left:221.7px;">7/20/20...</div>
<div class="t" style="top:802.31px;font-size:17.5px;color:#2e2e2e;left:315.7px;">2018-02-28</div>
<div class="t" style="top:802.31px;font-size:17.5px;color:#2e2e2e;left:758.3px;">Magazyn główny 515 B2C</div>
<div class="t" style="top:802.31px;font-size:17.5px;color:#2e2e2e;left:1245.75px;">36 509,00</div>
<svg class="r" style="left:1413px;top:803.85px" width="14" height="12" viewBox="0 0 14 12" fill="none"><path d="M1 6.5L5 10.5L13 1.5" stroke="#a3b78a" stroke-width="1.25"/></svg>
<div class="r" style="left:125.7px;top:860.55px;width:1476.7px;height:1px;background:#efefef;"></div>
<div class="r" style="left:1037.8px;top:829.4px;width:52px;height:29.45px;background:linear-gradient(90deg,#c9c4fa 0%,#dcd8fb 35%,#eeebfd 70%,#ffffff 100%);"></div>
<div class="r" style="left:129px;top:836.7px;width:16.5px;height:15.5px;box-sizing:border-box;border:1.4px solid #dcdcdc;background:#fff"></div>
<div class="t" style="top:836.16px;font-size:17.5px;color:#2e2e2e;left:154.8px;">MM-</div>
<div class="t" style="top:836.16px;font-size:17.5px;color:#2e2e2e;left:221.7px;">8/20/20...</div>
<div class="t" style="top:836.16px;font-size:17.5px;color:#2e2e2e;left:315.7px;">2018-02-28</div>
<div class="t" style="top:836.16px;font-size:17.5px;color:#2e2e2e;left:758.3px;">Sklep Poznań</div>
<div class="t" style="top:836.16px;font-size:17.5px;color:#2e2e2e;left:1245.75px;">18 532,00</div>
<svg class="r" style="left:1413px;top:837.7px" width="14" height="12" viewBox="0 0 14 12" fill="none"><path d="M1 6.5L5 10.5L13 1.5" stroke="#a3b78a" stroke-width="1.25"/></svg>
<div class="r" style="left:125.7px;top:894.4px;width:1476.7px;height:1px;background:#efefef;"></div>
<div class="r" style="left:1037.8px;top:863.25px;width:106px;height:29.45px;background:linear-gradient(90deg,#c9c4fa 0%,#dcd8fb 35%,#eeebfd 70%,#ffffff 100%);"></div>
<div class="r" style="left:129px;top:870.55px;width:16.5px;height:15.5px;box-sizing:border-box;border:1.4px solid #dcdcdc;background:#fff"></div>
<div class="t" style="top:870.01px;font-size:17.5px;color:#2e2e2e;left:154.8px;">MM-</div>
<div class="t" style="top:870.01px;font-size:17.5px;color:#2e2e2e;left:221.7px;">9/20/20...</div>
<div class="t" style="top:870.01px;font-size:17.5px;color:#2e2e2e;left:315.7px;">2018-02-28</div>
<div class="t" style="top:870.01px;font-size:17.5px;color:#2e2e2e;left:758.3px;">Magazyn główny 515 B2B</div>
<div class="t" style="top:870.01px;font-size:17.5px;color:#2e2e2e;left:1245.75px;">36 508,00</div>
<svg class="r" style="left:1413px;top:871.55px" width="14" height="12" viewBox="0 0 14 12" fill="none"><path d="M1 6.5L5 10.5L13 1.5" stroke="#a3b78a" stroke-width="1.25"/></svg>
<div class="r" style="left:125.7px;top:928.25px;width:1476.7px;height:1px;background:#efefef;"></div>
<div class="r" style="left:1037.8px;top:897.1px;width:92px;height:29.45px;background:linear-gradient(90deg,#c9c4fa 0%,#dcd8fb 35%,#eeebfd 70%,#ffffff 100%);"></div>
<div class="r" style="left:129px;top:904.4px;width:16.5px;height:15.5px;box-sizing:border-box;border:1.4px solid #dcdcdc;background:#fff"></div>
<div class="t" style="top:903.86px;font-size:17.5px;color:#2e2e2e;left:154.8px;">MM-</div>
<div class="t" style="top:903.86px;font-size:17.5px;color:#2e2e2e;left:221.7px;">10/20/2...</div>
<div class="t" style="top:903.86px;font-size:17.5px;color:#2e2e2e;left:315.7px;">2018-02-28</div>
<div class="t" style="top:903.86px;font-size:17.5px;color:#2e2e2e;left:758.3px;">Magazyn główny 515 CSD</div>
<div class="t" style="top:903.86px;font-size:17.5px;color:#2e2e2e;left:1245.75px;">31 408,00</div>
<svg class="r" style="left:1413px;top:905.4px" width="14" height="12" viewBox="0 0 14 12" fill="none"><path d="M1 6.5L5 10.5L13 1.5" stroke="#a3b78a" stroke-width="1.25"/></svg>
<div class="r" style="left:125.7px;top:962.1px;width:1476.7px;height:1px;background:#efefef;"></div>
<div class="r" style="left:129px;top:938.25px;width:16.5px;height:15.5px;box-sizing:border-box;border:1.4px solid #dcdcdc;background:#fff"></div>
<div class="t" style="top:937.71px;font-size:17.5px;color:#2e2e2e;left:154.8px;">WZ</div>
<div class="t" style="top:937.71px;font-size:17.5px;color:#2e2e2e;left:221.7px;">2/20/20...</div>
<div class="t" style="top:937.71px;font-size:17.5px;color:#2e2e2e;left:315.7px;">2018-03-01</div>
<div class="t" style="top:937.71px;font-size:17.5px;color:#2e2e2e;left:512.57px;">0</div>
<div class="t" style="top:937.71px;font-size:17.5px;color:#2e2e2e;left:531px;">NIEZNANY</div>
<div class="t" style="top:937.71px;font-size:17.5px;color:#2e2e2e;left:1270.07px;">246,00</div>
<svg class="r" style="left:1413px;top:939.25px" width="14" height="12" viewBox="0 0 14 12" fill="none"><path d="M1 6.5L5 10.5L13 1.5" stroke="#a3b78a" stroke-width="1.25"/></svg>
<div class="r" style="left:125.7px;top:995.95px;width:1476.7px;height:1px;background:#efefef;"></div>
<div class="r" style="left:129px;top:972.1px;width:16.5px;height:15.5px;box-sizing:border-box;border:1.4px solid #dcdcdc;background:#fff"></div>
<div class="t" style="top:971.56px;font-size:17.5px;color:#2e2e2e;left:154.8px;">WZ</div>
<div class="t" style="top:971.56px;font-size:17.5px;color:#2e2e2e;left:221.7px;">3/20/20...</div>
<div class="t" style="top:971.56px;font-size:17.5px;color:#2e2e2e;left:315.7px;">2018-03-01</div>
<div class="t" style="top:971.56px;font-size:17.5px;color:#2e2e2e;left:512.57px;">0</div>
<div class="t" style="top:971.56px;font-size:17.5px;color:#2e2e2e;left:531px;">NIEZNANY</div>
<div class="t" style="top:971.56px;font-size:17.5px;color:#2e2e2e;left:1270.07px;">292,00</div>
<svg class="r" style="left:1413px;top:973.1px" width="14" height="12" viewBox="0 0 14 12" fill="none"><path d="M1 6.5L5 10.5L13 1.5" stroke="#a3b78a" stroke-width="1.25"/></svg>
<div class="r" style="left:125.7px;top:1029.8px;width:1476.7px;height:1px;background:#efefef;"></div>
<div class="r" style="left:129px;top:1005.95px;width:16.5px;height:15.5px;box-sizing:border-box;border:1.4px solid #dcdcdc;background:#fff"></div>
<div class="t" style="top:1005.41px;font-size:17.5px;color:#2e2e2e;left:154.8px;">WZ</div>
<div class="t" style="top:1005.41px;font-size:17.5px;color:#2e2e2e;left:221.7px;">4/20/20...</div>
<div class="t" style="top:1005.41px;font-size:17.5px;color:#2e2e2e;left:315.7px;">2018-03-01</div>
<div class="t" style="top:1005.41px;font-size:17.5px;color:#2e2e2e;left:512.57px;">0</div>
<div class="t" style="top:1005.41px;font-size:17.5px;color:#2e2e2e;left:531px;">NIEZNANY</div>
<div class="t" style="top:1005.41px;font-size:17.5px;color:#2e2e2e;left:1270.07px;">292,00</div>
<svg class="r" style="left:1413px;top:1006.95px" width="14" height="12" viewBox="0 0 14 12" fill="none"><path d="M1 6.5L5 10.5L13 1.5" stroke="#a3b78a" stroke-width="1.25"/></svg>
<div class="r" style="left:125.7px;top:1063.65px;width:1476.7px;height:1px;background:#efefef;"></div>
<div class="r" style="left:1037.5px;top:1032.5px;width:2.5px;height:29.45px;background:#cdc8f6;"></div>
<div class="r" style="left:129px;top:1039.8px;width:16.5px;height:15.5px;box-sizing:border-box;border:1.4px solid #dcdcdc;background:#fff"></div>
<div class="t" style="top:1039.26px;font-size:17.5px;color:#2e2e2e;left:154.8px;">MM-</div>
<div class="t" style="top:1039.26px;font-size:17.5px;color:#2e2e2e;left:221.7px;">11/20/2...</div>
<div class="t" style="top:1039.26px;font-size:17.5px;color:#2e2e2e;left:315.7px;">2018-03-01</div>
<div class="t" style="top:1039.26px;font-size:17.5px;color:#2e2e2e;left:758.3px;">Magazyn główny 515 B2C</div>
<div class="t" style="top:1039.26px;font-size:17.5px;color:#2e2e2e;left:1255.48px;">1 690,00</div>
<svg class="r" style="left:1413px;top:1040.8px" width="14" height="12" viewBox="0 0 14 12" fill="none"><path d="M1 6.5L5 10.5L13 1.5" stroke="#a3b78a" stroke-width="1.25"/></svg>
<div class="r" style="left:1037.5px;top:1066.5px;width:2.5px;height:3.5px;background:#d6d2f8;"></div>
<div class="r" style="left:1610px;top:422.6px;width:25px;height:648.4px;background:#f0f0f0;"></div>
<div class="r" style="left:1610px;top:444.8px;width:25px;height:260.2px;background:#bebebe;"></div>
<svg class="r" style="left:1616.5px;top:429.6px" width="12" height="8" viewBox="0 0 12 8" fill="none"><path d="M1.8 6.3L6 2.2L10.2 6.3" stroke="#888" stroke-width="1.8"/></svg>
<svg class="r" style="left:1616.5px;top:1054px" width="12" height="8" viewBox="0 0 12 8" fill="none"><path d="M1.8 1.7L6 5.8L10.2 1.7" stroke="#888" stroke-width="1.8"/></svg>
<div class="t" style="top:366.09px;font-size:17.8px;color:#666;font-weight:bold;-webkit-text-stroke:0;left:1655.3px;transform:scaleX(0.9874);transform-origin:left;">Pozycje dokumentu przyjęcia magazynowego</div>
<div class="r" style="left:1653.6px;top:389px;width:780.4px;height:1.2px;background:#e6e6e6;"></div>
<svg class="r" style="left:2405px;top:367.7px" width="12" height="13" viewBox="0 0 12 13" fill="none"><path d="M3 1.5H9M4 1.5V7H8V1.5M2 7H10M6 7V12" stroke="#bdbdbd" stroke-width="1.1"/></svg>
<svg class="r" style="left:2423px;top:369.2px" width="11" height="11" viewBox="0 0 11 11" fill="none"><path d="M1 1L10 10M10 1L1 10" stroke="#a8a8a8" stroke-width="1.3"/></svg>
<svg class="r" style="left:1660px;top:400px" width="11" height="10" viewBox="0 0 11 10" fill="none"><path d="M0.5 1.5H10.5M0.5 5H10.5M0.5 8.5H10.5" stroke="#b5b5b5" stroke-width="1.3"/></svg>
<div class="t" style="top:397.27px;font-size:16.5px;color:#6a6a6a;-webkit-text-stroke:0.22px currentColor;left:1712px;transform:scaleX(0.9155);transform-origin:left;">Lp.</div>
<div class="t" style="top:397.27px;font-size:16.5px;color:#6a6a6a;-webkit-text-stroke:0.22px currentColor;left:1831.7px;transform:scaleX(0.9520);transform-origin:left;">Ilość</div>
<div class="t" style="top:397.27px;font-size:16.5px;color:#6a6a6a;-webkit-text-stroke:0.22px currentColor;left:1932px;transform:scaleX(0.9668);transform-origin:left;">Indeks</div>
<div class="t" style="top:397.27px;font-size:16.5px;color:#6a6a6a;-webkit-text-stroke:0.22px currentColor;left:2102.9px;transform:scaleX(0.9895);transform-origin:left;">Nazwa krótka</div>
<div class="r" style="left:1653.6px;top:420px;width:749.6px;height:1px;background:#e6e6e6;"></div>
<div class="r" style="left:1653.6px;top:454.35px;width:749.6px;height:1px;background:#efefef;"></div>
<div class="r" style="left:1679px;top:421.4px;width:724.2px;height:32.15px;background:#d5d5d5;"></div>
<div class="r" style="left:1763.1px;top:421.4px;width:1.6px;height:32.15px;background:#fff;"></div>
<div class="r" style="left:1926.2px;top:421.4px;width:1.6px;height:32.15px;background:#fff;"></div>
<div class="r" style="left:2097px;top:421.4px;width:1.6px;height:32.15px;background:#fff;"></div>
<div class="r" style="left:1657px;top:430.5px;width:16.5px;height:15.5px;box-sizing:border-box;border:1.4px solid #dcdcdc;background:#fff"></div>
<div class="t" style="top:429.96px;font-size:17.5px;color:#2e2e2e;left:1750.27px;">1</div>
<div class="t" style="top:429.96px;font-size:17.5px;color:#2e2e2e;left:1879.61px;">25,00</div>
<div class="t" style="top:429.96px;font-size:17.5px;color:#2e2e2e;left:1932px;">820107-061</div>
<div class="t" style="top:429.96px;font-size:17.5px;color:#2e2e2e;left:2102.9px;">Buty piłkarskie Nike Hypervenom Ph...</div>
<div class="r" style="left:1653.6px;top:488.2px;width:749.6px;height:1px;background:#efefef;"></div>
<div class="r" style="left:1766px;top:456.65px;width:50.25px;height:30.25px;background:linear-gradient(90deg,#c3fbfc 0%,#d5fcfd 40%,#edfefe 75%,#ffffff 100%);"></div>
<div class="r" style="left:1657px;top:464.35px;width:16.5px;height:15.5px;box-sizing:border-box;border:1.4px solid #dcdcdc;background:#fff"></div>
<div class="t" style="top:463.81px;font-size:17.5px;color:#2e2e2e;left:1750.27px;">2</div>
<div class="t" style="top:463.81px;font-size:17.5px;color:#2e2e2e;left:1879.61px;">50,00</div>
<div class="t" style="top:463.81px;font-size:17.5px;color:#2e2e2e;left:1932px;">820107-061</div>
<div class="t" style="top:463.81px;font-size:17.5px;color:#2e2e2e;left:2102.9px;">Buty piłkarskie Nike Hypervenom Ph...</div>
<div class="r" style="left:1653.6px;top:522.05px;width:749.6px;height:1px;background:#efefef;"></div>
<div class="r" style="left:1766px;top:490.5px;width:23px;height:30.25px;background:linear-gradient(90deg,#c3fbfc 0%,#d5fcfd 40%,#edfefe 75%,#ffffff 100%);"></div>
<div class="r" style="left:1657px;top:498.2px;width:16.5px;height:15.5px;box-sizing:border-box;border:1.4px solid #dcdcdc;background:#fff"></div>
<div class="t" style="top:497.66px;font-size:17.5px;color:#2e2e2e;left:1750.27px;">3</div>
<div class="t" style="top:497.66px;font-size:17.5px;color:#2e2e2e;left:1879.61px;">25,00</div>
<div class="t" style="top:497.66px;font-size:17.5px;color:#2e2e2e;left:1932px;">820107-061</div>
<div class="t" style="top:497.66px;font-size:17.5px;color:#2e2e2e;left:2102.9px;">Buty piłkarskie Nike Hypervenom Ph...</div>
<div class="r" style="left:1653.6px;top:555.9px;width:749.6px;height:1px;background:#efefef;"></div>
<div class="r" style="left:1766px;top:524.35px;width:50.25px;height:30.25px;background:linear-gradient(90deg,#c3fbfc 0%,#d5fcfd 40%,#edfefe 75%,#ffffff 100%);"></div>
<div class="r" style="left:1657px;top:532.05px;width:16.5px;height:15.5px;box-sizing:border-box;border:1.4px solid #dcdcdc;background:#fff"></div>
<div class="t" style="top:531.51px;font-size:17.5px;color:#2e2e2e;left:1750.27px;">4</div>
<div class="t" style="top:531.51px;font-size:17.5px;color:#2e2e2e;left:1879.61px;">50,00</div>
<div class="t" style="top:531.51px;font-size:17.5px;color:#2e2e2e;left:1932px;">820107-061</div>
<div class="t" style="top:531.51px;font-size:17.5px;color:#2e2e2e;left:2102.9px;">Buty piłkarskie Nike Hypervenom Ph...</div>
<div class="r" style="left:1653.6px;top:589.75px;width:749.6px;height:1px;background:#efefef;"></div>
<div class="r" style="left:1766px;top:558.2px;width:44.8px;height:30.25px;background:linear-gradient(90deg,#c3fbfc 0%,#d5fcfd 40%,#edfefe 75%,#ffffff 100%);"></div>
<div class="r" style="left:1657px;top:565.9px;width:16.5px;height:15.5px;box-sizing:border-box;border:1.4px solid #dcdcdc;background:#fff"></div>
<div class="t" style="top:565.36px;font-size:17.5px;color:#2e2e2e;left:1750.27px;">5</div>
<div class="t" style="top:565.36px;font-size:17.5px;color:#2e2e2e;left:1879.61px;">45,00</div>
<div class="t" style="top:565.36px;font-size:17.5px;color:#2e2e2e;left:1932px;">S74637</div>
<div class="t" style="top:565.36px;font-size:17.5px;color:#2e2e2e;left:2102.9px;transform:scaleX(0.9787);transform-origin:left;">Buty piłkarskie adidas X 15.3 FG/AG ...</div>
<div class="r" style="left:1653.6px;top:623.6px;width:749.6px;height:1px;background:#efefef;"></div>
<div class="r" style="left:1766px;top:592.05px;width:88.4px;height:30.25px;background:linear-gradient(90deg,#c3fbfc 0%,#d5fcfd 40%,#edfefe 75%,#ffffff 100%);"></div>
<div class="r" style="left:1657px;top:599.75px;width:16.5px;height:15.5px;box-sizing:border-box;border:1.4px solid #dcdcdc;background:#fff"></div>
<div class="t" style="top:599.21px;font-size:17.5px;color:#2e2e2e;left:1750.27px;">6</div>
<div class="t" style="top:599.21px;font-size:17.5px;color:#2e2e2e;left:1879.61px;">85,00</div>
<div class="t" style="top:599.21px;font-size:17.5px;color:#2e2e2e;left:1932px;">S74637</div>
<div class="t" style="top:599.21px;font-size:17.5px;color:#2e2e2e;left:2102.9px;transform:scaleX(0.9787);transform-origin:left;">Buty piłkarskie adidas X 15.3 FG/AG ...</div>
<div class="r" style="left:1653.6px;top:657.45px;width:749.6px;height:1px;background:#efefef;"></div>
<div class="r" style="left:1766px;top:625.9px;width:44.8px;height:30.25px;background:linear-gradient(90deg,#c3fbfc 0%,#d5fcfd 40%,#edfefe 75%,#ffffff 100%);"></div>
<div class="r" style="left:1657px;top:633.6px;width:16.5px;height:15.5px;box-sizing:border-box;border:1.4px solid #dcdcdc;background:#fff"></div>
<div class="t" style="top:633.06px;font-size:17.5px;color:#2e2e2e;left:1750.27px;">7</div>
<div class="t" style="top:633.06px;font-size:17.5px;color:#2e2e2e;left:1879.61px;">45,00</div>
<div class="t" style="top:633.06px;font-size:17.5px;color:#2e2e2e;left:1932px;">S74637</div>
<div class="t" style="top:633.06px;font-size:17.5px;color:#2e2e2e;left:2102.9px;transform:scaleX(0.9787);transform-origin:left;">Buty piłkarskie adidas X 15.3 FG/AG ...</div>
<div class="r" style="left:1653.6px;top:691.3px;width:749.6px;height:1px;background:#efefef;"></div>
<div class="r" style="left:1766px;top:659.75px;width:88.4px;height:30.25px;background:linear-gradient(90deg,#c3fbfc 0%,#d5fcfd 40%,#edfefe 75%,#ffffff 100%);"></div>
<div class="r" style="left:1657px;top:667.45px;width:16.5px;height:15.5px;box-sizing:border-box;border:1.4px solid #dcdcdc;background:#fff"></div>
<div class="t" style="top:666.91px;font-size:17.5px;color:#2e2e2e;left:1750.27px;">8</div>
<div class="t" style="top:666.91px;font-size:17.5px;color:#2e2e2e;left:1879.61px;">85,00</div>
<div class="t" style="top:666.91px;font-size:17.5px;color:#2e2e2e;left:1932px;">S74637</div>
<div class="t" style="top:666.91px;font-size:17.5px;color:#2e2e2e;left:2102.9px;transform:scaleX(0.9787);transform-origin:left;">Buty piłkarskie adidas X 15.3 FG/AG ...</div>
<div class="r" style="left:1653.6px;top:725.15px;width:749.6px;height:1px;background:#efefef;"></div>
<div class="r" style="left:1766px;top:693.6px;width:23px;height:30.25px;background:linear-gradient(90deg,#c3fbfc 0%,#d5fcfd 40%,#edfefe 75%,#ffffff 100%);"></div>
<div class="r" style="left:1657px;top:701.3px;width:16.5px;height:15.5px;box-sizing:border-box;border:1.4px solid #dcdcdc;background:#fff"></div>
<div class="t" style="top:700.76px;font-size:17.5px;color:#2e2e2e;left:1750.27px;">9</div>
<div class="t" style="top:700.76px;font-size:17.5px;color:#2e2e2e;left:1879.61px;">25,00</div>
<div class="t" style="top:700.76px;font-size:17.5px;color:#2e2e2e;left:1932px;">AQ4845</div>
<div class="t" style="top:700.76px;font-size:17.5px;color:#2e2e2e;left:2102.9px;">Buty biegowe adidas hyperfast 2.0 c...</div>
<div class="r" style="left:1653.6px;top:759px;width:749.6px;height:1px;background:#efefef;"></div>
<div class="r" style="left:1766px;top:727.45px;width:50.25px;height:30.25px;background:linear-gradient(90deg,#c3fbfc 0%,#d5fcfd 40%,#edfefe 75%,#ffffff 100%);"></div>
<div class="r" style="left:1657px;top:735.15px;width:16.5px;height:15.5px;box-sizing:border-box;border:1.4px solid #dcdcdc;background:#fff"></div>
<div class="t" style="top:734.61px;font-size:17.5px;color:#2e2e2e;left:1740.53px;">10</div>
<div class="t" style="top:734.61px;font-size:17.5px;color:#2e2e2e;left:1879.61px;">50,00</div>
<div class="t" style="top:734.61px;font-size:17.5px;color:#2e2e2e;left:1932px;">AQ4845</div>
<div class="t" style="top:734.61px;font-size:17.5px;color:#2e2e2e;left:2102.9px;">Buty biegowe adidas hyperfast 2.0 c...</div>
<div class="r" style="left:1653.6px;top:792.85px;width:749.6px;height:1px;background:#efefef;"></div>
<div class="r" style="left:1766px;top:761.3px;width:23px;height:30.25px;background:linear-gradient(90deg,#c3fbfc 0%,#d5fcfd 40%,#edfefe 75%,#ffffff 100%);"></div>
<div class="r" style="left:1657px;top:769px;width:16.5px;height:15.5px;box-sizing:border-box;border:1.4px solid #dcdcdc;background:#fff"></div>
<div class="t" style="top:768.46px;font-size:17.5px;color:#2e2e2e;left:1741.83px;">11</div>
<div class="t" style="top:768.46px;font-size:17.5px;color:#2e2e2e;left:1879.61px;">25,00</div>
<div class="t" style="top:768.46px;font-size:17.5px;color:#2e2e2e;left:1932px;">AQ4845</div>
<div class="t" style="top:768.46px;font-size:17.5px;color:#2e2e2e;left:2102.9px;">Buty biegowe adidas hyperfast 2.0 c...</div>
<div class="r" style="left:1653.6px;top:826.7px;width:749.6px;height:1px;background:#efefef;"></div>
<div class="r" style="left:1766px;top:795.15px;width:50.25px;height:30.25px;background:linear-gradient(90deg,#c3fbfc 0%,#d5fcfd 40%,#edfefe 75%,#ffffff 100%);"></div>
<div class="r" style="left:1657px;top:802.85px;width:16.5px;height:15.5px;box-sizing:border-box;border:1.4px solid #dcdcdc;background:#fff"></div>
<div class="t" style="top:802.31px;font-size:17.5px;color:#2e2e2e;left:1740.53px;">12</div>
<div class="t" style="top:802.31px;font-size:17.5px;color:#2e2e2e;left:1879.61px;">50,00</div>
<div class="t" style="top:802.31px;font-size:17.5px;color:#2e2e2e;left:1932px;">AQ4845</div>
<div class="t" style="top:802.31px;font-size:17.5px;color:#2e2e2e;left:2102.9px;">Buty biegowe adidas hyperfast 2.0 c...</div>
<div class="r" style="left:1653.6px;top:860.55px;width:749.6px;height:1px;background:#efefef;"></div>
<div class="r" style="left:1766px;top:829px;width:61.15px;height:30.25px;background:linear-gradient(90deg,#c3fbfc 0%,#d5fcfd 40%,#edfefe 75%,#ffffff 100%);"></div>
<div class="r" style="left:1657px;top:836.7px;width:16.5px;height:15.5px;box-sizing:border-box;border:1.4px solid #dcdcdc;background:#fff"></div>
<div class="t" style="top:836.16px;font-size:17.5px;color:#2e2e2e;left:1740.53px;">13</div>
<div class="t" style="top:836.16px;font-size:17.5px;color:#2e2e2e;left:1879.61px;">60,00</div>
<div class="t" style="top:836.16px;font-size:17.5px;color:#2e2e2e;left:1932px;">C520N-5283</div>
<div class="t" style="top:836.16px;font-size:17.5px;color:#2e2e2e;left:2102.9px;transform:scaleX(0.9755);transform-origin:left;">Buty biegowe asics Pre-Galaxy 8 PS ...</div>
<div class="r" style="left:1653.6px;top:894.4px;width:749.6px;height:1px;background:#efefef;"></div>
<div class="r" style="left:1766px;top:862.85px;width:82.95px;height:30.25px;background:linear-gradient(90deg,#c3fbfc 0%,#d5fcfd 40%,#edfefe 75%,#ffffff 100%);"></div>
<div class="r" style="left:1657px;top:870.55px;width:16.5px;height:15.5px;box-sizing:border-box;border:1.4px solid #dcdcdc;background:#fff"></div>
<div class="t" style="top:870.01px;font-size:17.5px;color:#2e2e2e;left:1740.53px;">14</div>
<div class="t" style="top:870.01px;font-size:17.5px;color:#2e2e2e;left:1879.61px;">80,00</div>
<div class="t" style="top:870.01px;font-size:17.5px;color:#2e2e2e;left:1932px;">C520N-5283</div>
<div class="t" style="top:870.01px;font-size:17.5px;color:#2e2e2e;left:2102.9px;transform:scaleX(0.9755);transform-origin:left;">Buty biegowe asics Pre-Galaxy 8 PS ...</div>
<div class="r" style="left:1653.6px;top:928.25px;width:749.6px;height:1px;background:#efefef;"></div>
<div class="r" style="left:1766px;top:896.7px;width:61.15px;height:30.25px;background:linear-gradient(90deg,#c3fbfc 0%,#d5fcfd 40%,#edfefe 75%,#ffffff 100%);"></div>
<div class="r" style="left:1657px;top:904.4px;width:16.5px;height:15.5px;box-sizing:border-box;border:1.4px solid #dcdcdc;background:#fff"></div>
<div class="t" style="top:903.86px;font-size:17.5px;color:#2e2e2e;left:1740.53px;">15</div>
<div class="t" style="top:903.86px;font-size:17.5px;color:#2e2e2e;left:1879.61px;">60,00</div>
<div class="t" style="top:903.86px;font-size:17.5px;color:#2e2e2e;left:1932px;">C520N-5283</div>
<div class="t" style="top:903.86px;font-size:17.5px;color:#2e2e2e;left:2102.9px;transform:scaleX(0.9755);transform-origin:left;">Buty biegowe asics Pre-Galaxy 8 PS ...</div>
<div class="r" style="left:1653.6px;top:962.1px;width:749.6px;height:1px;background:#efefef;"></div>
<div class="r" style="left:1766px;top:930.55px;width:82.95px;height:30.25px;background:linear-gradient(90deg,#c3fbfc 0%,#d5fcfd 40%,#edfefe 75%,#ffffff 100%);"></div>
<div class="r" style="left:1657px;top:938.25px;width:16.5px;height:15.5px;box-sizing:border-box;border:1.4px solid #dcdcdc;background:#fff"></div>
<div class="t" style="top:937.71px;font-size:17.5px;color:#2e2e2e;left:1740.53px;">16</div>
<div class="t" style="top:937.71px;font-size:17.5px;color:#2e2e2e;left:1879.61px;">80,00</div>
<div class="t" style="top:937.71px;font-size:17.5px;color:#2e2e2e;left:1932px;">C520N-5283</div>
<div class="t" style="top:937.71px;font-size:17.5px;color:#2e2e2e;left:2102.9px;transform:scaleX(0.9755);transform-origin:left;">Buty biegowe asics Pre-Galaxy 8 PS ...</div>
<div class="r" style="left:1653.6px;top:995.95px;width:749.6px;height:1px;background:#efefef;"></div>
<div class="r" style="left:1766px;top:964.4px;width:23px;height:30.25px;background:linear-gradient(90deg,#c3fbfc 0%,#d5fcfd 40%,#edfefe 75%,#ffffff 100%);"></div>
<div class="r" style="left:1657px;top:972.1px;width:16.5px;height:15.5px;box-sizing:border-box;border:1.4px solid #dcdcdc;background:#fff"></div>
<div class="t" style="top:971.56px;font-size:17.5px;color:#2e2e2e;left:1740.53px;">17</div>
<div class="t" style="top:971.56px;font-size:17.5px;color:#2e2e2e;left:1879.61px;">25,00</div>
<div class="t" style="top:971.56px;font-size:17.5px;color:#2e2e2e;left:1932px;">749826-001 Q3</div>
<div class="t" style="top:971.56px;font-size:17.5px;color:#2e2e2e;left:2102.9px;transform:scaleX(0.9917);transform-origin:left;">Buty biegowe Nike Tri Fusion Run G...</div>
<div class="r" style="left:1653.6px;top:1029.8px;width:749.6px;height:1px;background:#efefef;"></div>
<div class="r" style="left:1766px;top:998.25px;width:50.25px;height:30.25px;background:linear-gradient(90deg,#c3fbfc 0%,#d5fcfd 40%,#edfefe 75%,#ffffff 100%);"></div>
<div class="r" style="left:1657px;top:1005.95px;width:16.5px;height:15.5px;box-sizing:border-box;border:1.4px solid #dcdcdc;background:#fff"></div>
<div class="t" style="top:1005.41px;font-size:17.5px;color:#2e2e2e;left:1740.53px;">18</div>
<div class="t" style="top:1005.41px;font-size:17.5px;color:#2e2e2e;left:1879.61px;">50,00</div>
<div class="t" style="top:1005.41px;font-size:17.5px;color:#2e2e2e;left:1932px;">749826-001 Q3</div>
<div class="t" style="top:1005.41px;font-size:17.5px;color:#2e2e2e;left:2102.9px;transform:scaleX(0.9917);transform-origin:left;">Buty biegowe Nike Tri Fusion Run G...</div>
<div class="r" style="left:1653.6px;top:1063.65px;width:749.6px;height:1px;background:#efefef;"></div>
<div class="r" style="left:1766px;top:1032.1px;width:23px;height:30.25px;background:linear-gradient(90deg,#c3fbfc 0%,#d5fcfd 40%,#edfefe 75%,#ffffff 100%);"></div>
<div class="r" style="left:1657px;top:1039.8px;width:16.5px;height:15.5px;box-sizing:border-box;border:1.4px solid #dcdcdc;background:#fff"></div>
<div class="t" style="top:1039.26px;font-size:17.5px;color:#2e2e2e;left:1740.53px;">19</div>
<div class="t" style="top:1039.26px;font-size:17.5px;color:#2e2e2e;left:1879.61px;">25,00</div>
<div class="t" style="top:1039.26px;font-size:17.5px;color:#2e2e2e;left:1932px;">749826-001 Q3</div>
<div class="t" style="top:1039.26px;font-size:17.5px;color:#2e2e2e;left:2102.9px;transform:scaleX(0.9917);transform-origin:left;">Buty biegowe Nike Tri Fusion Run G...</div>
<div class="r" style="left:1766px;top:1066.5px;width:24px;height:3.5px;background:linear-gradient(90deg,#c8f8fa,#fff);"></div>
<div class="r" style="left:2410.6px;top:422.8px;width:25.2px;height:648.2px;background:#f0f0f0;"></div>
<div class="r" style="left:2410.6px;top:445px;width:25.2px;height:358.8px;background:#bebebe;"></div>
<svg class="r" style="left:2417.2px;top:429.8px" width="12" height="8" viewBox="0 0 12 8" fill="none"><path d="M1.8 6.3L6 2.2L10.2 6.3" stroke="#888" stroke-width="1.8"/></svg>
<svg class="r" style="left:2417.2px;top:1054px" width="12" height="8" viewBox="0 0 12 8" fill="none"><path d="M1.8 1.7L6 5.8L10.2 1.7" stroke="#888" stroke-width="1.8"/></svg>
<div class="t" style="top:1088.49px;font-size:17.8px;color:#666;font-weight:bold;-webkit-text-stroke:0;left:127px;transform:scaleX(1.0052);transform-origin:left;">Powiązane dokumenty z dokumentem magazynowym</div>
<div class="r" style="left:125.7px;top:1110.8px;width:2308.3px;height:1.2px;background:#e6e6e6;"></div>
<svg class="r" style="left:2405px;top:1090px" width="12" height="13" viewBox="0 0 12 13" fill="none"><path d="M3 1.5H9M4 1.5V7H8V1.5M2 7H10M6 7V12" stroke="#bdbdbd" stroke-width="1.1"/></svg>
<svg class="r" style="left:2423px;top:1091.5px" width="11" height="11" viewBox="0 0 11 11" fill="none"><path d="M1 1L10 10M10 1L1 10" stroke="#a8a8a8" stroke-width="1.3"/></svg>
<svg class="r" style="left:131.5px;top:1122px" width="11" height="10" viewBox="0 0 11 10" fill="none"><path d="M0.5 1.5H10.5M0.5 5H10.5M0.5 8.5H10.5" stroke="#b5b5b5" stroke-width="1.3"/></svg>
<div class="t" style="top:1119.07px;font-size:16.5px;color:#6a6a6a;-webkit-text-stroke:0.22px currentColor;left:155px;transform:scaleX(1.0264);transform-origin:left;">Typ dokumentu</div>
<div class="t" style="top:1119.07px;font-size:16.5px;color:#6a6a6a;-webkit-text-stroke:0.22px currentColor;left:314px;transform:scaleX(1.0411);transform-origin:left;">Nr dokumentu</div>
<div class="t" style="top:1119.07px;font-size:16.5px;color:#6a6a6a;-webkit-text-stroke:0.22px currentColor;left:507px;transform:scaleX(1.0241);transform-origin:left;">Data dokumentu</div>
<div class="t" style="top:1119.07px;font-size:16.5px;color:#6a6a6a;-webkit-text-stroke:0.22px currentColor;left:643.5px;transform:scaleX(0.9801);transform-origin:left;">Miejsce wystawienia</div>
<div class="t" style="top:1119.07px;font-size:16.5px;color:#6a6a6a;-webkit-text-stroke:0.22px currentColor;left:1177.8px;transform:scaleX(1.0074);transform-origin:left;">Definicja dokumentu - Nazwa</div>
<div class="t" style="top:1119.07px;font-size:16.5px;color:#6a6a6a;-webkit-text-stroke:0.22px currentColor;left:2265px;">Wartość</div>
<div class="t" style="top:1119.07px;font-size:16.5px;color:#6a6a6a;-webkit-text-stroke:0.22px currentColor;left:2374px;transform:scaleX(0.9834);transform-origin:left;">Status</div>
<svg class="r" style="left:626px;top:1111px" width="12" height="8" viewBox="0 0 12 8" fill="none"><path d="M1.5 6.5L6 2L10.5 6.5" stroke="#5b8dcc" stroke-width="1.5"/></svg>
<div class="r" style="left:150.8px;top:1143.5px;width:2283.2px;height:33px;background:#d5d5d5;"></div>
<div class="r" style="left:308.2px;top:1143.5px;width:1.6px;height:33px;background:#fff;"></div>
<div class="r" style="left:496.2px;top:1143.5px;width:1.6px;height:33px;background:#fff;"></div>
<div class="r" style="left:637.2px;top:1143.5px;width:1.6px;height:33px;background:#fff;"></div>
<div class="r" style="left:1171.2px;top:1143.5px;width:1.6px;height:33px;background:#fff;"></div>
<div class="r" style="left:2228.7px;top:1143.5px;width:1.6px;height:33px;background:#fff;"></div>
<div class="r" style="left:2356.8px;top:1143.5px;width:1.6px;height:33px;background:#fff;"></div>
<div class="r" style="left:128.8px;top:1151.8px;width:16.5px;height:15.5px;box-sizing:border-box;border:1.4px solid #dcdcdc;background:#fff"></div>
<div class="t" style="top:1151.66px;font-size:17.5px;color:#2e2e2e;left:155px;">FAZ</div>
<div class="t" style="top:1151.66px;font-size:17.5px;color:#2e2e2e;left:314px;">2/T</div>
<div class="t" style="top:1151.66px;font-size:17.5px;color:#2e2e2e;left:523.98px;">2018-02-27</div>
<div class="t" style="top:1151.66px;font-size:17.5px;color:#2e2e2e;left:643.5px;">20</div>
<div class="t" style="top:1151.66px;font-size:17.5px;color:#2e2e2e;left:1177.8px;transform:scaleX(0.9955);transform-origin:left;">Faktura VAT z PZ w tle</div>
<div class="t" style="top:1151.66px;font-size:17.5px;color:#2e2e2e;left:2266.41px;">213 275,85</div>
<svg class="r" style="left:2391px;top:1153.5px" width="14" height="12" viewBox="0 0 14 12" fill="none"><path d="M1 6.5L5 10.5L13 1.5" stroke="#a3b78a" stroke-width="1.25"/></svg>
<div class="r" style="left:119.5px;top:1377px;width:2323px;height:1.4px;background:#e6e6e6;"></div>
<div class="r" style="left:2267px;top:1382px;width:100px;height:24.5px;background:#ece9a6;"></div>
<div class="r" style="left:2366.5px;top:1382px;width:1.5px;height:24.5px;background:#333;"></div>
<div class="t" style="top:1385.82px;font-size:16px;color:#2b2b2b;-webkit-text-stroke:0.22px currentColor;left:149.6px;transform:scaleX(1.0042);transform-origin:left;">Wik Torn</div>
<div class="t" style="top:1385.82px;font-size:16px;color:#2b2b2b;-webkit-text-stroke:0.22px currentColor;left:252.2px;transform:scaleX(0.9252);transform-origin:left;">118</div>
<div class="t" style="top:1385.82px;font-size:16px;color:#2b2b2b;-webkit-text-stroke:0.22px currentColor;left:315.5px;transform:scaleX(0.8709);transform-origin:left;">01</div>
<div class="t" style="top:1385.82px;font-size:16px;color:#2b2b2b;-webkit-text-stroke:0.22px currentColor;left:371.8px;transform:scaleX(0.8872);transform-origin:left;">1.0.179.1</div>
<div class="t" style="top:1385.82px;font-size:16px;color:#2b2b2b;-webkit-text-stroke:0.22px currentColor;left:471.8px;transform:scaleX(0.8780);transform-origin:left;">FIRMA</div>
<div class="t" style="top:1385.82px;font-size:16px;color:#2b2b2b;-webkit-text-stroke:0.22px currentColor;left:555.5px;transform:scaleX(0.9818);transform-origin:left;">Gospodarka magazynowa</div>
<div class="t" style="top:1385.82px;font-size:16px;color:#2b2b2b;-webkit-text-stroke:0.22px currentColor;left:777px;transform:scaleX(1.0424);transform-origin:left;">Monitor plików</div>
<div class="t" style="top:1385.82px;font-size:16px;color:#2b2b2b;-webkit-text-stroke:0.22px currentColor;left:2103.8px;transform:scaleX(0.9691);transform-origin:left;">Robocza</div>
<div class="t" style="top:1385.82px;font-size:16px;color:#2b2b2b;-webkit-text-stroke:0.22px currentColor;left:2199.7px;transform:scaleX(0.9379);transform-origin:left;">11:37:06</div>
<div class="t" style="top:1385.82px;font-size:16px;color:#2b2b2b;-webkit-text-stroke:0.22px currentColor;left:2284px;transform:scaleX(0.9944);transform-origin:left;">391M z 494M</div>
<div class="r" style="left:218.4px;top:1382px;width:1.2px;height:24.5px;background:#d2d2d2;"></div>
<div class="r" style="left:282.4px;top:1382px;width:1.2px;height:24.5px;background:#d2d2d2;"></div>
<div class="r" style="left:338.1px;top:1382px;width:1.2px;height:24.5px;background:#d2d2d2;"></div>
<div class="r" style="left:438.4px;top:1382px;width:1.2px;height:24.5px;background:#d2d2d2;"></div>
<div class="r" style="left:521.8px;top:1382px;width:1.2px;height:24.5px;background:#d2d2d2;"></div>
<div class="r" style="left:744.9px;top:1382px;width:1.2px;height:24.5px;background:#d2d2d2;"></div>
<div class="r" style="left:889.4px;top:1382px;width:1.2px;height:24.5px;background:#d2d2d2;"></div>
<div class="r" style="left:1828.8px;top:1382px;width:1.2px;height:24.5px;background:#d2d2d2;"></div>
<div class="r" style="left:2075.1px;top:1382px;width:1.2px;height:24.5px;background:#d2d2d2;"></div>
<div class="r" style="left:2166.4px;top:1382px;width:1.2px;height:24.5px;background:#d2d2d2;"></div>
<div class="r" style="left:2190.4px;top:1382px;width:1.2px;height:24.5px;background:#d2d2d2;"></div>
<div class="r" style="left:2263.4px;top:1382px;width:1.2px;height:24.5px;background:#d2d2d2;"></div>
<div class="r" style="left:2392.4px;top:1382px;width:1.2px;height:24.5px;background:#d2d2d2;"></div>
<div class="r" style="left:2415.4px;top:1382px;width:1.2px;height:24.5px;background:#d2d2d2;"></div>
<svg class="r" style="left:124px;top:1385px" width="20" height="18" viewBox="0 0 20 18" fill="none"><path d="M6.5 5.5Q6.5 1.2 10 1.2Q13.5 1.2 13.5 5.5Q13.5 9.8 10 10Q6.5 9.8 6.5 5.5ZM7.5 10.5Q2.5 11.5 2 16.5H18Q17.5 11.5 12.5 10.5" stroke="#8aa6cc" stroke-width="1.3"/></svg>
<svg class="r" style="left:224px;top:1382px" width="26" height="24" viewBox="224 1382 26 24" fill="none"><path d="M231 1386.2H243Q245.2 1386.2 245.2 1388Q245.2 1389.4 243.6 1389.4H235.2" stroke="#d6c27c" stroke-width="1.4"/><path d="M230.8 1386.2Q228.6 1386.4 229 1388.2Q233.6 1392.5 233.8 1396.5Q233.6 1399.2 231.2 1399.3Q228.6 1399.5 228.8 1401.2Q229.4 1402.8 231.8 1402.8H242.2Q244 1402.8 244 1400.8V1389.4" stroke="#d6c27c" stroke-width="1.4"/></svg>
<svg class="r" style="left:290px;top:1384px" width="20" height="20" viewBox="0 0 20 20" fill="none"><rect x="5.5" y="1.5" width="9" height="13" stroke="#5e8fc8" stroke-width="1.3"/><path d="M8 5H12M8 8H12M10 14.5V17M2 18.5H18" stroke="#48a0a0" stroke-width="1.3"/></svg>
<svg class="r" style="left:346px;top:1385px" width="20" height="18" viewBox="0 0 20 18" fill="none"><rect x="1.5" y="1.5" width="17" height="12" stroke="#6f92c4" stroke-width="1.4"/><path d="M5 16.5H15" stroke="#6f92c4" stroke-width="1.4"/></svg>
<svg class="r" style="left:447px;top:1384px" width="20" height="20" viewBox="0 0 20 20" fill="none"><path d="M2 9L10 2L18 9M4 7.5V18H16V7.5" stroke="#9c95c8" stroke-width="1.3"/></svg>
<svg class="r" style="left:529px;top:1384px" width="20" height="20" viewBox="0 0 20 20" fill="none"><rect x="1.5" y="2" width="17" height="16" stroke="#e8a070" stroke-width="1.3"/><path d="M1.5 5.5H18.5" stroke="#e8a070" stroke-width="1.3"/></svg>
<svg class="r" style="left:750px;top:1382px" width="26" height="24" viewBox="750 1382 26 24" fill="none"><path d="M753.3 1389.8H762L765 1392.8V1403.3H753.3Z" stroke="#6aa58c" stroke-width="1.5" stroke-linejoin="round"/><path d="M760.8 1385H769.2L772.2 1388V1398.3H767.2" stroke="#6aa58c" stroke-width="1.5" stroke-linejoin="round"/><path d="M755.2 1387.6L758.4 1385.2L757.6 1388.2Z" fill="#4f8f74" stroke="#4f8f74" stroke-width="0.8"/><path d="M767.4 1403.2L770.6 1400.6L769.8 1403.4Z" fill="#4f8f74" stroke="#4f8f74" stroke-width="0.8"/></svg>
<svg class="r" style="left:1837px;top:1385px" width="18" height="18" viewBox="0 0 18 18" fill="none"><circle cx="9" cy="9" r="6.5" stroke="#e6e6e6" stroke-width="2" stroke-dasharray="2 1.5"/></svg>
<svg class="r" style="left:2079px;top:1384px" width="20" height="20" viewBox="0 0 20 20" fill="none"><rect x="1.5" y="5" width="17" height="13" stroke="#5e8fc8" stroke-width="1.4"/><path d="M7 5V2H13V5M1.5 10.5H18.5" stroke="#5e8fc8" stroke-width="1.3"/><rect x="8.5" y="9" width="3" height="3" stroke="#5e8fc8" stroke-width="1.2"/></svg>
<svg class="r" style="left:2169px;top:1383px" width="20" height="22" viewBox="0 0 20 22" fill="none"><rect x="1.5" y="7" width="13" height="13" stroke="#6f92c4" stroke-width="1.4"/><path d="M4.5 7V4H17.5V17H14.5M7 4V1.5H19V14" stroke="#6f92c4" stroke-width="1.2"/></svg>
<svg class="r" style="left:2396px;top:1384px" width="17" height="20" viewBox="0 0 17 20" fill="none"><path d="M1 4H16M6 4V1.5H11V4M3 6L4 19H13L14 6Z" stroke="#555" stroke-width="1.4" fill="#888"/><path d="M6.5 7.5V17M8.5 7.5V17M10.5 7.5V17" stroke="#ddd" stroke-width="0.9"/></svg>
</body></html>
